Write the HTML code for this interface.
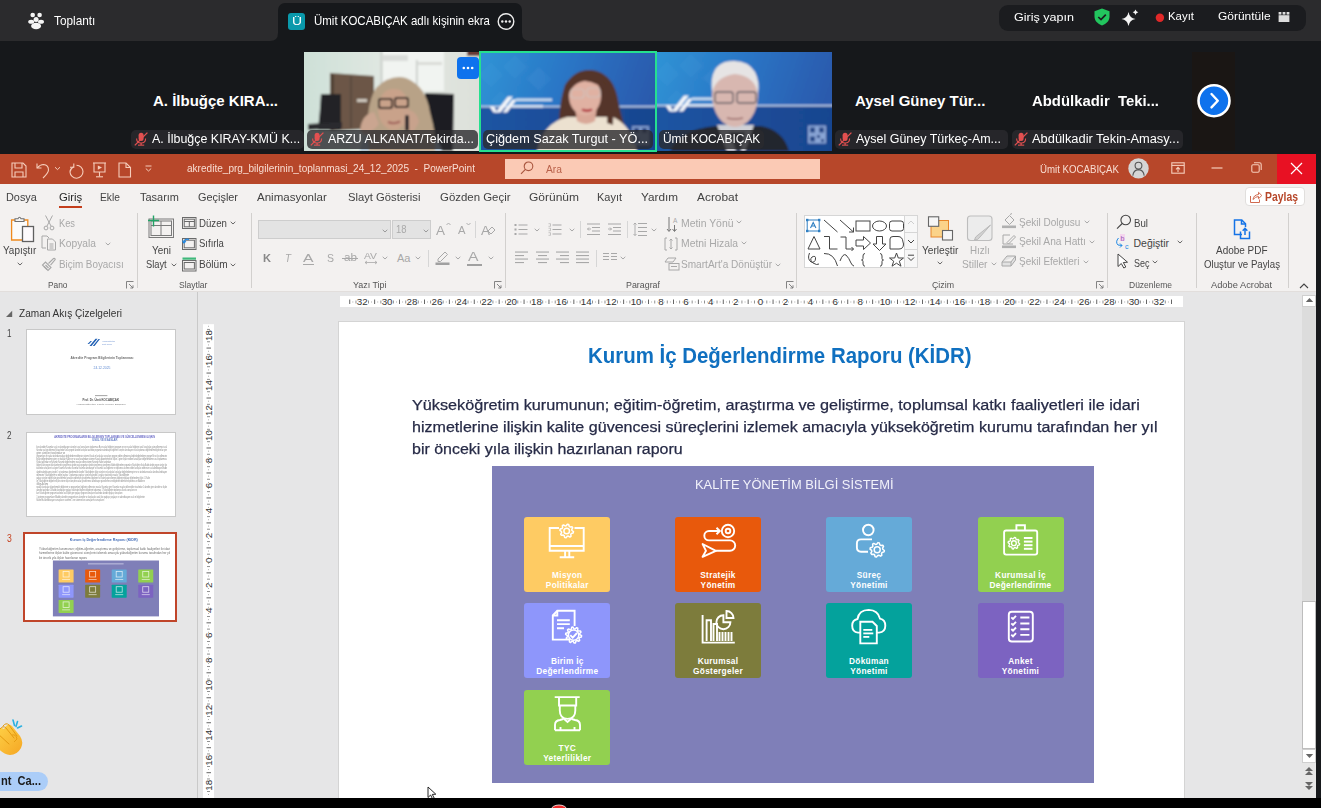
<!DOCTYPE html><html><head><meta charset="utf-8"><style>html,body{margin:0;padding:0}
body{width:1321px;height:808px;overflow:hidden;position:relative;background:#17191c;font-family:"Liberation Sans",sans-serif}
.a{position:absolute}
.t{position:absolute;white-space:pre;line-height:1;transform-origin:0 0}
</style></head><body>
<div class="a" style="left:0px;top:0px;width:1321px;height:40.8px;background:#2b2b2d"></div>
<div class="a" style="left:278px;top:3px;width:244px;height:38px;background:#16181b;border-radius:7px 7px 0 0"></div>
<svg class="a" style="left:270px;top:33px;" width="8" height="8" viewBox="0 0 8 8"><path d="M8 0 V8 H0 Q8 8 8 0Z" fill="#16181b"/></svg>
<svg class="a" style="left:522px;top:33px;" width="8" height="8" viewBox="0 0 8 8"><path d="M0 0 V8 H8 Q0 8 0 0Z" fill="#16181b"/></svg>
<svg class="a" style="left:28px;top:12px;" width="17" height="18" viewBox="0 0 17 18"><g fill="#f4f4f4"><circle cx="4.7" cy="3" r="2.3"/><circle cx="11.6" cy="3" r="2.3"/><circle cx="8.1" cy="7.4" r="2.5"/><ellipse cx="3.2" cy="9.8" rx="3" ry="2"/><ellipse cx="13" cy="9.8" rx="3" ry="2"/><ellipse cx="8.1" cy="14" rx="5" ry="3.2"/></g></svg>
<span class="t" id="t0" style="left:54px;top:14.77px;font-size:12.2px;color:#ffffff;font-family:'Liberation Sans',sans-serif;transform:scaleX(0.9675);">Toplantı</span>
<div class="a" style="left:288px;top:13px;width:17px;height:17px;background:#0a99ab;border-radius:3px"></div>
<span class="t" id="t1" style="left:291.5px;top:16.19px;font-size:11px;color:#ffffff;font-family:'Liberation Sans',sans-serif;transform:scaleX(1.2574);">Ü</span>
<span class="t" id="t2" style="left:314px;top:14.57px;font-size:12.2px;color:#ffffff;font-family:'Liberation Sans',sans-serif;transform:scaleX(0.9415);">Ümit KOCABIÇAK adlı kişinin ekra</span>
<svg class="a" style="left:497px;top:13px;" width="18" height="18" viewBox="0 0 18 18"><circle cx="9" cy="8.5" r="7.8" fill="none" stroke="#eee" stroke-width="1.4"/><g fill="#eee"><circle cx="5.3" cy="8.5" r="1.2"/><circle cx="9" cy="8.5" r="1.2"/><circle cx="12.7" cy="8.5" r="1.2"/></g></svg>
<div class="a" style="left:999px;top:5px;width:307px;height:26px;background:#1b1c1f;border-radius:9px"></div>
<span class="t" id="t3" style="left:1013.8px;top:11.71px;font-size:11.8px;color:#ffffff;font-family:'Liberation Sans',sans-serif;transform:scaleX(1.0658);">Giriş yapın</span>
<svg class="a" style="left:1093px;top:8px;" width="18" height="18" viewBox="0 0 18 18"><path d="M9 0.5 L16.5 3.3 V8.5 C16.5 13 13.3 15.8 9 17.5 C4.7 15.8 1.5 13 1.5 8.5 V3.3Z" fill="#22c55e"/><path d="M5.3 9 L8 11.6 L12.8 6.6" fill="none" stroke="#1b1c1f" stroke-width="1.7"/></svg>
<svg class="a" style="left:1120px;top:9px;" width="20" height="18" viewBox="0 0 20 18"><path d="M8.5 3 Q9.5 9 15.5 10 Q9.5 11 8.5 17 Q7.5 11 1.5 10 Q7.5 9 8.5 3Z" fill="#f4f4f4"/><path d="M15.5 0.5 Q16 2.8 18.3 3.3 Q16 3.8 15.5 6.1 Q15 3.8 12.7 3.3 Q15 2.8 15.5 0.5Z" fill="#f4f4f4"/></svg>
<svg class="a" style="left:1155px;top:13px;" width="10" height="10" viewBox="0 0 10 10"><circle cx="4.9" cy="4.8" r="4.2" fill="#e02828"/></svg>
<span class="t" id="t4" style="left:1168px;top:10.81px;font-size:11.8px;color:#ffffff;font-family:'Liberation Sans',sans-serif;transform:scaleX(0.9669);">Kayıt</span>
<span class="t" id="t5" style="left:1218.4px;top:10.81px;font-size:11.8px;color:#ffffff;font-family:'Liberation Sans',sans-serif;transform:scaleX(1.0152);">Görüntüle</span>
<svg class="a" style="left:1278px;top:11px;" width="12" height="12" viewBox="0 0 12 12"><g fill="#dcdcdc"><rect x="0.6" y="1" width="2.8" height="2.6"/><rect x="4.6" y="1" width="2.8" height="2.6"/><rect x="8.6" y="1" width="2.8" height="2.6"/><rect x="0.6" y="4.2" width="10.8" height="6.8"/></g></svg>
<div class="a" style="left:0px;top:40.8px;width:1321px;height:113.2px;background:#16181b"></div>
<span class="t" id="t6" style="left:153px;top:93.30px;font-size:15px;color:#ffffff;font-weight:700;font-family:'Liberation Sans',sans-serif;">A. İlbuğçe KIRA...</span>
<svg class="a" style="left:304px;top:52px;" width="176" height="99" viewBox="0 0 176 99"><defs><filter id="bl1" x="-5%" y="-5%" width="110%" height="110%"><feGaussianBlur stdDeviation="1"/></filter>
<linearGradient id="wall1" x1="0" x2="1"><stop offset="0" stop-color="#cde0d7"/><stop offset="0.5" stop-color="#e2e8e3"/><stop offset="1" stop-color="#dde0da"/></linearGradient></defs>
<g filter="url(#bl1)">
<rect x="-4" y="-4" width="184" height="107" fill="url(#wall1)"/>
<rect x="77" y="-2" width="63" height="41" fill="#f1f4f1"/>
<rect x="76.5" y="-2" width="2" height="42" fill="#c9cdc9"/><rect x="112" y="8" width="1.6" height="32" fill="#c5c9c5"/>
<rect x="79" y="3" width="25" height="6" fill="#d9dcd9"/><rect x="114" y="10" width="24" height="3" fill="#dadcd8"/>
<rect x="163" y="-2" width="15" height="6" fill="#6a3a36"/>
<path d="M26 21 L70 24 L70 70 L60 77 L26 79Z" fill="#6c5746"/>
<rect x="27" y="22" width="3" height="57" fill="#4f4034"/><rect x="46" y="24" width="2" height="52" fill="#5a4a3c"/>
<rect x="53" y="47" width="10" height="3" fill="#cfc8be"/>
<path d="M17 42 L37 42 L37 78 L14 78 Q16 60 17 42Z" fill="#232428"/>
<path d="M4 72 L38 70 L38 76 L4 78Z" fill="#2a2b2e"/>
<path d="M121 41 L150 42 L149 99 L121 99Z" fill="#1d1e22"/>
<path d="M56 99 Q58 82 72 76 L116 76 Q134 84 138 99Z" fill="#a9bccd"/>
<path d="M65 99 Q60 55 72 36 Q86 22 102 26 Q122 34 126 60 Q133 85 131 99Z" fill="#b8a287"/>
<ellipse cx="89.5" cy="57" rx="15.5" ry="21" fill="#c9a28a"/>
<path d="M74 40 Q82 28 96 30 Q108 34 110 46 Q100 36 88 37 Q78 38 74 48Z" fill="#b8a287"/>
<rect x="75" y="47" width="13" height="9" rx="2" fill="none" stroke="#2a2220" stroke-width="2"/><rect x="91" y="46" width="13" height="9" rx="2" fill="none" stroke="#2a2220" stroke-width="2"/>
<path d="M84 70 Q90 72.5 96 69.5" stroke="#a0605a" stroke-width="2" fill="none"/>
<path d="M56 78 Q58 62 70 60 L75 72 Q68 81 60 83Z" fill="#caa590"/>
<path d="M100 58 Q112 56 115 70 L109 81 L100 77Z" fill="#c8a28c"/>
<rect x="101" y="63" width="4" height="16" rx="1.5" fill="#262629"/>
</g></svg>
<div class="a" style="left:307px;top:130px;width:171px;height:18.7px;background:rgba(42,43,46,0.8);border-radius:5px"></div>
<svg class="a" style="left:309.5px;top:132px;" width="14" height="14" viewBox="0 0 14 14"><g fill="#e25050"><rect x="4.6" y="0.8" width="5" height="8.2" rx="2.5"/><path d="M2.6 6.5 Q2.6 11 7.1 11 Q11.6 11 11.6 6.5" fill="none" stroke="#e25050" stroke-width="1.1"/><rect x="6.5" y="11" width="1.2" height="2"/><rect x="4" y="12.6" width="6.2" height="1.1"/></g><path d="M0.8 13.4 L13.4 0.6" stroke="#e25050" stroke-width="1.3"/></svg>
<span class="t" id="t7" style="left:328px;top:133.22px;font-size:12.5px;color:#ffffff;font-family:'Liberation Sans',sans-serif;transform:scaleX(0.9929);">ARZU ALKANAT/Tekirda...</span>
<div class="a" style="left:131.3px;top:130px;width:172.3px;height:18.7px;background:rgba(42,43,46,0.8);border-radius:5px"></div>
<svg class="a" style="left:133.8px;top:132px;" width="14" height="14" viewBox="0 0 14 14"><g fill="#e25050"><rect x="4.6" y="0.8" width="5" height="8.2" rx="2.5"/><path d="M2.6 6.5 Q2.6 11 7.1 11 Q11.6 11 11.6 6.5" fill="none" stroke="#e25050" stroke-width="1.1"/><rect x="6.5" y="11" width="1.2" height="2"/><rect x="4" y="12.6" width="6.2" height="1.1"/></g><path d="M0.8 13.4 L13.4 0.6" stroke="#e25050" stroke-width="1.3"/></svg>
<span class="t" id="t8" style="left:152.3px;top:133.22px;font-size:12.5px;color:#ffffff;font-family:'Liberation Sans',sans-serif;transform:scaleX(0.9962);">A. İlbuğçe KIRAY-KMÜ K...</span>
<div class="a" style="left:457px;top:57px;width:22px;height:22px;background:#0e72ed;border-radius:4px"></div>
<svg class="a" style="left:457px;top:57px;" width="22" height="22" viewBox="0 0 22 22"><g fill="#fff"><circle cx="6.8" cy="11" r="1.3"/><circle cx="11" cy="11" r="1.3"/><circle cx="15.2" cy="11" r="1.3"/></g></svg>
<svg class="a" style="left:481px;top:53px;" width="175" height="98" viewBox="0 0 175 98"><defs><filter id="blc" x="-5%" y="-5%" width="110%" height="110%"><feGaussianBlur stdDeviation="0.9"/></filter>
<linearGradient id="skyc" x1="0" y1="0" x2="1" y2="0.2"><stop offset="0" stop-color="#2f95d6"/><stop offset="0.5" stop-color="#2b76c6"/><stop offset="1" stop-color="#2a5aad"/></linearGradient>
<linearGradient id="lowc" x1="0" y1="0" x2="1" y2="0"><stop offset="0" stop-color="#1d55a3"/><stop offset="1" stop-color="#19458f"/></linearGradient></defs>
<g filter="url(#blc)">
<rect x="-4" y="-4" width="183" height="106" fill="url(#skyc)"/>
<g fill="#5ab0e8" opacity="0.1"><path d="M10 10 L22 22 L10 34 L-2 22Z"/><path d="M34 2 L46 14 L34 26 L22 14Z"/><path d="M58 14 L70 26 L58 38 L46 26Z"/><path d="M20 38 L30 48 L20 54 L10 48Z"/></g>
<rect x="-4" y="53.6" width="183" height="98" fill="url(#lowc)"/>
<rect x="-4" y="52.8" width="183" height="1.6" fill="#c4d4ec"/>
<g fill="#f4f6fa"><path d="M8.6 53.5 L13 53.5 L16.5 59.5 L12.5 59.5Z"/><path d="M14.5 59.5 L27 43.5 L32 43.5 L19.5 59.5Z"/><path d="M21.5 59.5 L31.5 46.5 L35.8 46.5 L26 59.5Z"/></g>
<rect x="35" y="45.5" width="36" height="2.6" fill="#e8eef8" opacity="0.85"/><rect x="31" y="52" width="31" height="2.6" fill="#e8eef8" opacity="0.8"/>
<path d="M78 98 Q76 55 84 32 Q94 16 110 17 Q130 19 136 42 Q142 75 152 98Z" fill="#553429"/>
<path d="M56 98 Q62 70 86 64 L132 64 Q150 72 156 98Z" fill="#ece1d0"/>
<path d="M94 54 L116 54 L114 68 Q105 74 96 68Z" fill="#d9a898"/>
<ellipse cx="104" cy="43" rx="16" ry="19.5" fill="#e0b1a2"/>
<path d="M86 38 Q90 20 106 21 Q122 22 124 40 Q118 29 104 28 Q92 29 86 44Z" fill="#553429"/>
<path d="M118 30 Q128 40 126 70 L132 72 Q134 40 122 28Z" fill="#553429"/>
<rect x="90" y="36" width="13" height="9" rx="3" fill="none" stroke="#d0c2bc" stroke-width="1.1"/><rect x="106" y="35" width="13" height="9" rx="3" fill="none" stroke="#d0c2bc" stroke-width="1.1"/>
<path d="M101 56.5 Q106 59 111 56.5" stroke="#b0303a" stroke-width="2.4" fill="none"/>
<g opacity="0.75"><rect x="151" y="73" width="17" height="19" fill="#9fb6e0"/><rect x="153" y="75" width="5" height="5" fill="#28407a"/><rect x="161" y="75" width="5" height="5" fill="#28407a"/><rect x="153" y="84" width="5" height="5" fill="#28407a"/></g>
</g></svg>
<svg class="a" style="left:657px;top:52px;" width="175" height="99" viewBox="0 0 175 99"><defs><filter id="blu" x="-5%" y="-5%" width="110%" height="110%"><feGaussianBlur stdDeviation="0.9"/></filter>
<linearGradient id="skyu" x1="0" y1="0" x2="1" y2="0.2"><stop offset="0" stop-color="#2f95d6"/><stop offset="0.5" stop-color="#2b76c6"/><stop offset="1" stop-color="#2a5aad"/></linearGradient>
<linearGradient id="lowu" x1="0" y1="0" x2="1" y2="0"><stop offset="0" stop-color="#1d55a3"/><stop offset="1" stop-color="#19458f"/></linearGradient></defs>
<g filter="url(#blu)">
<rect x="-4" y="-4" width="183" height="107" fill="url(#skyu)"/>
<g fill="#5ab0e8" opacity="0.1"><path d="M10 10 L22 22 L10 34 L-2 22Z"/><path d="M34 2 L46 14 L34 26 L22 14Z"/><path d="M58 14 L70 26 L58 38 L46 26Z"/><path d="M20 38 L30 48 L20 54 L10 48Z"/></g>
<rect x="-4" y="53.6" width="183" height="99" fill="url(#lowu)"/>
<rect x="-4" y="52.8" width="183" height="1.6" fill="#c4d4ec"/>
<g fill="#f4f6fa"><path d="M8.6 53.5 L13 53.5 L16.5 59.5 L12.5 59.5Z"/><path d="M14.5 59.5 L27 43.5 L32 43.5 L19.5 59.5Z"/><path d="M21.5 59.5 L31.5 46.5 L35.8 46.5 L26 59.5Z"/></g>
<rect x="35" y="45.5" width="36" height="2.6" fill="#e8eef8" opacity="0.85"/><rect x="31" y="52" width="31" height="2.6" fill="#e8eef8" opacity="0.8"/>
<path d="M13 99 Q22 78 58 74 L104 74 Q126 78 132 99Z" fill="#24262d"/>
<path d="M60 73 L70 99 L88 99 L97 73Z" fill="#cfd0d6"/><path d="M72 80 L79 99 L84 99 L88 80Z" fill="#33353c"/>
<ellipse cx="78" cy="43" rx="23" ry="32" fill="#d8b7b0"/>
<path d="M55 40 Q52 12 72 9.3 Q90 7 98 20 Q103 30 101 42 Q98 24 78 22 Q60 24 55 40Z" fill="#e6e4e4"/>
<rect x="58" y="40" width="18" height="11" rx="2.5" fill="none" stroke="#5d5860" stroke-width="1.3"/><rect x="80" y="40" width="19" height="11" rx="2.5" fill="none" stroke="#5d5860" stroke-width="1.3"/>
<path d="M70 66 Q78 68 86 66" stroke="#9a6a68" stroke-width="1.4" fill="none"/>
<g opacity="0.8"><rect x="151" y="73.5" width="18" height="18" fill="#a6bde6"/><rect x="153" y="75.5" width="5" height="5" fill="#2a4a88"/><rect x="162" y="75.5" width="5" height="5" fill="#2a4a88"/><rect x="153" y="84.5" width="5" height="5" fill="#2a4a88"/><rect x="160" y="83" width="3" height="3" fill="#2a4a88"/><rect x="164" y="87" width="3" height="3" fill="#2a4a88"/></g>
</g></svg>
<div class="a" style="left:479px;top:51.3px;width:178px;height:100.7px;border:2px solid #25e08f;box-sizing:border-box"></div>
<div class="a" style="left:483px;top:130px;width:170px;height:18.7px;background:rgba(42,43,46,0.8);border-radius:5px"></div>
<span class="t" id="t9" style="left:486px;top:133.22px;font-size:12.5px;color:#ffffff;font-family:'Liberation Sans',sans-serif;transform:scaleX(1.0153);">Çiğdem Sazak Turgut - YÖ...</span>
<div class="a" style="left:659px;top:130px;width:105px;height:18.7px;background:rgba(42,43,46,0.8);border-radius:5px"></div>
<span class="t" id="t10" style="left:662.7px;top:133.22px;font-size:12.5px;color:#ffffff;font-family:'Liberation Sans',sans-serif;transform:scaleX(0.9529);">Ümit KOCABIÇAK</span>
<span class="t" id="t11" style="left:855px;top:93.30px;font-size:15px;color:#ffffff;font-weight:700;font-family:'Liberation Sans',sans-serif;">Aysel Güney Tür...</span>
<span class="t" id="t12" style="left:1032px;top:93.30px;font-size:15px;color:#ffffff;font-weight:700;font-family:'Liberation Sans',sans-serif;transform:scaleX(0.9915);">Abdülkadir  Teki...</span>
<div class="a" style="left:835px;top:130px;width:173px;height:18.7px;background:rgba(42,43,46,0.8);border-radius:5px"></div>
<svg class="a" style="left:837.5px;top:132px;" width="14" height="14" viewBox="0 0 14 14"><g fill="#e25050"><rect x="4.6" y="0.8" width="5" height="8.2" rx="2.5"/><path d="M2.6 6.5 Q2.6 11 7.1 11 Q11.6 11 11.6 6.5" fill="none" stroke="#e25050" stroke-width="1.1"/><rect x="6.5" y="11" width="1.2" height="2"/><rect x="4" y="12.6" width="6.2" height="1.1"/></g><path d="M0.8 13.4 L13.4 0.6" stroke="#e25050" stroke-width="1.3"/></svg>
<span class="t" id="t13" style="left:856px;top:133.22px;font-size:12.5px;color:#ffffff;font-family:'Liberation Sans',sans-serif;transform:scaleX(0.9970);">Aysel Güney Türkeç-Am...</span>
<div class="a" style="left:1011.5px;top:130px;width:171.5px;height:18.7px;background:rgba(42,43,46,0.8);border-radius:5px"></div>
<svg class="a" style="left:1014.0px;top:132px;" width="14" height="14" viewBox="0 0 14 14"><g fill="#e25050"><rect x="4.6" y="0.8" width="5" height="8.2" rx="2.5"/><path d="M2.6 6.5 Q2.6 11 7.1 11 Q11.6 11 11.6 6.5" fill="none" stroke="#e25050" stroke-width="1.1"/><rect x="6.5" y="11" width="1.2" height="2"/><rect x="4" y="12.6" width="6.2" height="1.1"/></g><path d="M0.8 13.4 L13.4 0.6" stroke="#e25050" stroke-width="1.3"/></svg>
<span class="t" id="t14" style="left:1032px;top:133.22px;font-size:12.5px;color:#ffffff;font-family:'Liberation Sans',sans-serif;transform:scaleX(1.0289);">Abdülkadir Tekin-Amasy...</span>
<div class="a" style="left:1192px;top:52px;width:43px;height:99px;background:#1a1614"></div>
<svg class="a" style="left:1196px;top:83px;" width="36" height="36" viewBox="0 0 36 36"><circle cx="18" cy="17.7" r="15.5" fill="#0e72ed" stroke="#fff" stroke-width="2.6"/><path d="M15.5 11 L21.8 17.7 L15.5 24.4" fill="none" stroke="#fff" stroke-width="2.4" stroke-linecap="round" stroke-linejoin="round"/></svg>
<div class="a" style="left:0px;top:154px;width:1316px;height:644px;background:#e6e6e6"></div>
<div class="a" style="left:0px;top:154px;width:1316px;height:29.6px;background:#b7472a"></div>
<svg class="a" style="left:11px;top:162px;" width="16" height="16" viewBox="0 0 16 16"><g fill="none" stroke="#f6cdbb" stroke-width="1.1"><path d="M1 1 H12 L15 4 V15 H1Z"/><path d="M4 1 V6 H11 V1"/><path d="M4 15 V10 H12 V15"/></g></svg>
<svg class="a" style="left:35px;top:162px;" width="17" height="17" viewBox="0 0 17 17"><g fill="none" stroke="#f6cdbb" stroke-width="1.1"><path d="M2 1.5 V6 H6.5"/><path d="M2.3 5.8 Q5 2.5 8.5 2.5 Q13.5 3 13.5 8 Q13.3 11 8 16"/></g></svg>
<svg class="a" style="left:54px;top:166px;" width="7" height="5" viewBox="0 0 7 5"><path d="M1 1.2 L3.5 3.6 L6 1.2" fill="none" stroke="#f6cdbb" stroke-width="1"/></svg>
<svg class="a" style="left:68px;top:162px;" width="17" height="17" viewBox="0 0 17 17"><g fill="none" stroke="#f6cdbb" stroke-width="1.1"><path d="M5.8 1.5 V5.2 H2"/><path d="M5.6 4.8 Q2 7 2 10 A6.5 6.5 0 1 0 8.5 3.2"/></g></svg>
<svg class="a" style="left:92px;top:162px;" width="15" height="16" viewBox="0 0 15 16"><g fill="none" stroke="#f6cdbb" stroke-width="1.1"><path d="M1 1 H14"/><path d="M2 1 V10 H13 V1"/><path d="M7.5 10 V14.5"/><path d="M4 14.8 H11"/></g><path d="M5.8 3.4 L10 5.6 L5.8 7.8Z" fill="#f6cdbb"/></svg>
<svg class="a" style="left:118px;top:162px;" width="14" height="16" viewBox="0 0 14 16"><g fill="none" stroke="#f6cdbb" stroke-width="1.1"><path d="M1 1 H8 L12.5 5.5 V15 H1Z"/><path d="M8 1 V5.5 H12.5"/></g></svg>
<svg class="a" style="left:144px;top:164px;" width="9" height="9" viewBox="0 0 9 9"><g fill="none" stroke="#f6cdbb" stroke-width="1"><path d="M1.5 2 H7.5"/><path d="M1.8 4.5 L4.5 7 L7.2 4.5"/></g></svg>
<span class="t" id="t15" style="left:186.8px;top:162.71px;font-size:10.5px;color:#f8ddd2;font-family:'Liberation Sans',sans-serif;transform:scaleX(0.9580);">akredite_prg_bilgilerinin_toplanmasi_24_12_2025  -  PowerPoint</span>
<div class="a" style="left:505px;top:159.2px;width:315px;height:19.6px;background:#fbcab5"></div>
<svg class="a" style="left:518px;top:160px;" width="18" height="18" viewBox="0 0 18 18"><g fill="none" stroke="#a8553e" stroke-width="1.1"><circle cx="10.5" cy="6.3" r="4.3"/><path d="M7.4 9.4 L3 13.8"/></g></svg>
<span class="t" id="t16" style="left:546px;top:163.91px;font-size:10.5px;color:#b9614a;font-family:'Liberation Sans',sans-serif;transform:scaleX(0.9790);">Ara</span>
<span class="t" id="t17" style="left:1039.8px;top:163.89px;font-size:11px;color:#f8ddd2;font-family:'Liberation Sans',sans-serif;transform:scaleX(0.8792);">Ümit KOCABIÇAK</span>
<svg class="a" style="left:1128px;top:158px;" width="21" height="21" viewBox="0 0 21 21"><circle cx="10.5" cy="10.4" r="10.2" fill="#d5d5d5"/><g fill="none" stroke="#555" stroke-width="1.1"><circle cx="10.5" cy="7.6" r="3.4"/><path d="M4.8 17.6 Q5.5 11.8 10.5 11.6 Q15.5 11.8 16.2 17.6"/></g></svg>
<svg class="a" style="left:1171px;top:162px;" width="14" height="12" viewBox="0 0 14 12"><g fill="none" stroke="#f6cdbb" stroke-width="1.1"><rect x="0.8" y="0.8" width="12.4" height="10.4"/><path d="M0.8 3.4 H13.2"/><path d="M7 10 V5.5 M5 7.3 L7 5.3 L9 7.3"/></g></svg>
<svg class="a" style="left:1211px;top:166px;" width="12" height="4" viewBox="0 0 12 4"><path d="M0.5 2 H11.5" stroke="#f6cdbb" stroke-width="1.2"/></svg>
<svg class="a" style="left:1251px;top:162px;" width="11" height="11" viewBox="0 0 11 11"><g fill="none" stroke="#f6cdbb" stroke-width="1.1"><rect x="0.8" y="2.8" width="7.4" height="7.4" rx="1.2"/><path d="M3 0.8 H8.5 Q10.2 0.8 10.2 2.5 V8"/></g></svg>
<div class="a" style="left:1277px;top:154px;width:39px;height:29.6px;background:#e81123"></div>
<svg class="a" style="left:1290px;top:162px;" width="13" height="13" viewBox="0 0 13 13"><path d="M1 1 L12 12 M12 1 L1 12" stroke="#fff" stroke-width="1.2"/></svg>
<div class="a" style="left:0px;top:183.6px;width:1316px;height:108.4px;background:#f3f1f0;border-bottom:1px solid #e2dedc;box-sizing:border-box"></div>
<span class="t" id="t18" style="left:6.4px;top:192.09px;font-size:11px;color:#424242;font-family:'Liberation Sans',sans-serif;transform:scaleX(0.9876);">Dosya</span>
<span class="t" id="t19" style="left:59px;top:192.09px;font-size:11px;color:#262626;font-family:'Liberation Sans',sans-serif;transform:scaleX(1.0261);">Giriş</span>
<span class="t" id="t20" style="left:100.4px;top:192.09px;font-size:11px;color:#424242;font-family:'Liberation Sans',sans-serif;transform:scaleX(0.9296);">Ekle</span>
<span class="t" id="t21" style="left:140px;top:192.09px;font-size:11px;color:#424242;font-family:'Liberation Sans',sans-serif;transform:scaleX(0.9968);">Tasarım</span>
<span class="t" id="t22" style="left:198px;top:192.09px;font-size:11px;color:#424242;font-family:'Liberation Sans',sans-serif;transform:scaleX(0.9915);">Geçişler</span>
<span class="t" id="t23" style="left:257.4px;top:192.09px;font-size:11px;color:#424242;font-family:'Liberation Sans',sans-serif;transform:scaleX(1.0474);">Animasyonlar</span>
<span class="t" id="t24" style="left:347.6px;top:192.09px;font-size:11px;color:#424242;font-family:'Liberation Sans',sans-serif;transform:scaleX(1.0208);">Slayt Gösterisi</span>
<span class="t" id="t25" style="left:439.5px;top:192.09px;font-size:11px;color:#424242;font-family:'Liberation Sans',sans-serif;transform:scaleX(1.0387);">Gözden Geçir</span>
<span class="t" id="t26" style="left:529px;top:192.09px;font-size:11px;color:#424242;font-family:'Liberation Sans',sans-serif;transform:scaleX(1.0903);">Görünüm</span>
<span class="t" id="t27" style="left:597px;top:192.09px;font-size:11px;color:#424242;font-family:'Liberation Sans',sans-serif;transform:scaleX(0.9969);">Kayıt</span>
<span class="t" id="t28" style="left:641px;top:192.09px;font-size:11px;color:#424242;font-family:'Liberation Sans',sans-serif;transform:scaleX(1.0681);">Yardım</span>
<span class="t" id="t29" style="left:697px;top:192.09px;font-size:11px;color:#424242;font-family:'Liberation Sans',sans-serif;transform:scaleX(1.0812);">Acrobat</span>
<div class="a" style="left:59px;top:205.7px;width:23.2px;height:2.4px;background:#c43e1c"></div>
<div class="a" style="left:1245px;top:187px;width:60px;height:19px;background:#fff;border:1px solid #e1dfdd;border-radius:4px;box-sizing:border-box"></div>
<svg class="a" style="left:1249px;top:190px;" width="14" height="14" viewBox="0 0 14 14"><g fill="none" stroke="#d06a50" stroke-width="1"><path d="M1.5 6 V12.5 H10.5 V9.5"/><path d="M4 9.5 Q4.5 5 9.5 4.5 V2.3 L12.8 5.5 L9.5 8.7 V6.5 Q6.5 6.5 4 9.5Z"/></g></svg>
<span class="t" id="t30" style="left:1264.5px;top:191.14px;font-size:12px;color:#b7472a;font-weight:700;font-family:'Liberation Sans',sans-serif;transform:scaleX(0.8674);">Paylaş</span>
<div class="a" style="left:137px;top:213px;width:1px;height:75px;background:#d2d0ce"></div>
<div class="a" style="left:250.6px;top:213px;width:1px;height:75px;background:#d2d0ce"></div>
<div class="a" style="left:504.5px;top:213px;width:1px;height:75px;background:#d2d0ce"></div>
<div class="a" style="left:796px;top:213px;width:1px;height:75px;background:#d2d0ce"></div>
<div class="a" style="left:1107px;top:213px;width:1px;height:75px;background:#d2d0ce"></div>
<div class="a" style="left:1196px;top:213px;width:1px;height:75px;background:#d2d0ce"></div>
<div class="a" style="left:1288px;top:213px;width:1px;height:75px;background:#d2d0ce"></div>
<svg class="a" style="left:10px;top:215px;" width="26" height="28" viewBox="0 0 26 28"><path d="M1.6 5 H17.8 V25 H1.6Z" fill="#fbfbfb" stroke="#ef8a1e" stroke-width="1.3"/><path d="M5 6.5 V3.8 H8 Q9.5 0.8 11 3.8 H14 V6.5Z" fill="#f6f6f6" stroke="#707070" stroke-width="1.1"/><rect x="12.5" y="11.5" width="11" height="15" fill="#fdfafc" stroke="#606060" stroke-width="1.3"/></svg>
<span class="t" id="t31" style="left:3.3px;top:244.91px;font-size:10.5px;color:#444;font-family:'Liberation Sans',sans-serif;transform:scaleX(0.9433);">Yapıştır</span>
<svg class="a" style="left:17.3px;top:262.3px;" width="6" height="4" viewBox="0 0 6 4"><path d="M0.7 0.8 L3 3 L5.3 0.8" fill="none" stroke="#666" stroke-width="1"/></svg>
<svg class="a" style="left:43px;top:215px;" width="12" height="16" viewBox="0 0 12 16"><g fill="none" stroke="#a8a8a8" stroke-width="1"><path d="M2.5 0.5 L8 11 M9.5 0.5 L4 11"/><circle cx="3" cy="13" r="1.9"/><circle cx="9" cy="13" r="1.9"/></g></svg>
<span class="t" id="t32" style="left:58.6px;top:217.91px;font-size:10.5px;color:#a8a8a8;font-family:'Liberation Sans',sans-serif;transform:scaleX(0.8843);">Kes</span>
<svg class="a" style="left:41px;top:235px;" width="16" height="16" viewBox="0 0 16 16"><g fill="none" stroke="#a8a8a8" stroke-width="1"><path d="M5 13 H1 V1 H6 L8 3"/><path d="M6.5 4 H11.5 L14.5 7 V15 H6.5Z"/><path d="M8.5 9 H12.5 M8.5 11 H12.5 M8.5 13 H12.5"/></g></svg>
<span class="t" id="t33" style="left:58.6px;top:238.41px;font-size:10.5px;color:#a8a8a8;font-family:'Liberation Sans',sans-serif;transform:scaleX(0.9749);">Kopyala</span>
<svg class="a" style="left:104.5px;top:241.7px;" width="6" height="4" viewBox="0 0 6 4"><path d="M0.7 0.8 L3 3 L5.3 0.8" fill="none" stroke="#a8a8a8" stroke-width="1"/></svg>
<svg class="a" style="left:41px;top:256px;" width="16" height="16" viewBox="0 0 16 16"><g fill="none" stroke="#a8a8a8" stroke-width="1.1"><path d="M1.5 9 L7 14.5 L10 11.5 L4.5 6Z"/><path d="M7.5 7.5 L12.5 2.5 Q14 2 14.2 3.5 L9.5 9.2"/><path d="M3 10.5 L6 13.5 M4.5 9 L7.5 12"/></g></svg>
<span class="t" id="t34" style="left:58.8px;top:258.91px;font-size:10.5px;color:#a8a8a8;font-family:'Liberation Sans',sans-serif;transform:scaleX(0.9396);">Biçim Boyacısı</span>
<span class="t" id="t35" style="left:48.2px;top:279.76px;font-size:9.5px;color:#555;font-family:'Liberation Sans',sans-serif;transform:scaleX(0.8789);">Pano</span>
<svg class="a" style="left:126px;top:281px;" width="8" height="8" viewBox="0 0 8 8"><g fill="none" stroke="#777" stroke-width="0.9"><path d="M0.5 7.5 V0.5 H7.5"/><path d="M3 3 L7 7 M7 4.3 V7 H4.3"/></g></svg>
<svg class="a" style="left:147px;top:215px;" width="28" height="24" viewBox="0 0 28 24"><g fill="none" stroke="#7a7a7a" stroke-width="1"><rect x="2" y="4" width="24.5" height="18.5"/><rect x="4" y="6" width="20.5" height="14.5"/><path d="M14 6 V20.5 M4 10.5 H24.5"/></g><path d="M6.5 0.5 V11.5 M1 5.5 H12" stroke="#21a366" stroke-width="1.4"/></svg>
<span class="t" id="t36" style="left:152.1px;top:245.31px;font-size:10.5px;color:#444;font-family:'Liberation Sans',sans-serif;transform:scaleX(0.9470);">Yeni</span>
<span class="t" id="t37" style="left:145.8px;top:258.91px;font-size:10.5px;color:#444;font-family:'Liberation Sans',sans-serif;transform:scaleX(0.8867);">Slayt</span>
<svg class="a" style="left:170.8px;top:262.6px;" width="6" height="4" viewBox="0 0 6 4"><path d="M0.7 0.8 L3 3 L5.3 0.8" fill="none" stroke="#666" stroke-width="1"/></svg>
<svg class="a" style="left:181.5px;top:216.5px;" width="15" height="12" viewBox="0 0 15 12"><g fill="none" stroke="#6a6a6a" stroke-width="1"><rect x="0.5" y="0.5" width="13.5" height="11"/><rect x="2.2" y="2.2" width="10.2" height="7.6"/><path d="M2.2 4.5 H12.4 M7.3 4.5 V9.8"/></g></svg>
<span class="t" id="t38" style="left:199.4px;top:217.91px;font-size:10.5px;color:#444;font-family:'Liberation Sans',sans-serif;transform:scaleX(0.9190);">Düzen</span>
<svg class="a" style="left:230px;top:221.2px;" width="6" height="4" viewBox="0 0 6 4"><path d="M0.7 0.8 L3 3 L5.3 0.8" fill="none" stroke="#666" stroke-width="1"/></svg>
<svg class="a" style="left:181.5px;top:236.5px;" width="15" height="13" viewBox="0 0 15 13"><g fill="none" stroke="#6a6a6a" stroke-width="1"><rect x="0.5" y="1.5" width="13.5" height="11"/><rect x="2.2" y="3.2" width="10.2" height="7.6"/></g><path d="M1.5 5.5 Q3 1 7 2.5" fill="none" stroke="#1e88e5" stroke-width="1.2"/><path d="M0.5 3.5 L1.8 6 L4 4.3" fill="none" stroke="#1e88e5" stroke-width="1.1"/></svg>
<span class="t" id="t39" style="left:199.4px;top:238.41px;font-size:10.5px;color:#444;font-family:'Liberation Sans',sans-serif;transform:scaleX(0.9075);">Sıfırla</span>
<svg class="a" style="left:181.5px;top:256.5px;" width="15" height="15" viewBox="0 0 15 15"><rect x="0.5" y="0.5" width="13.5" height="2.2" fill="#3fb87a"/><g fill="none" stroke="#6a6a6a" stroke-width="1"><rect x="0.5" y="3.5" width="13.5" height="10.5"/><rect x="2.2" y="5.5" width="10.2" height="6.5"/></g></svg>
<span class="t" id="t40" style="left:199.4px;top:258.91px;font-size:10.5px;color:#444;font-family:'Liberation Sans',sans-serif;transform:scaleX(0.9608);">Bölüm</span>
<svg class="a" style="left:230px;top:262.6px;" width="6" height="4" viewBox="0 0 6 4"><path d="M0.7 0.8 L3 3 L5.3 0.8" fill="none" stroke="#666" stroke-width="1"/></svg>
<span class="t" id="t41" style="left:178.9px;top:279.76px;font-size:9.5px;color:#555;font-family:'Liberation Sans',sans-serif;transform:scaleX(0.8963);">Slaytlar</span>
<div class="a" style="left:258px;top:220px;width:132.5px;height:19.3px;background:#e3e3e3;border:1px solid #cdcdcd;box-sizing:border-box"></div>
<svg class="a" style="left:382px;top:228.5px;" width="6" height="4" viewBox="0 0 6 4"><path d="M0.7 0.8 L3 3 L5.3 0.8" fill="none" stroke="#999" stroke-width="1"/></svg>
<div class="a" style="left:392px;top:220px;width:38.5px;height:19.3px;background:#e3e3e3;border:1px solid #cdcdcd;box-sizing:border-box"></div>
<span class="t" id="t42" style="left:396px;top:225.34px;font-size:10px;color:#a9a9a9;font-family:'Liberation Sans',sans-serif;transform:scaleX(0.9438);">18</span>
<svg class="a" style="left:423px;top:228.5px;" width="6" height="4" viewBox="0 0 6 4"><path d="M0.7 0.8 L3 3 L5.3 0.8" fill="none" stroke="#999" stroke-width="1"/></svg>
<span class="t" id="t43" style="left:436px;top:223.50px;font-size:13px;color:#a8a8a8;font-family:'Liberation Sans',sans-serif;transform:scaleX(1.0378);">A</span>
<svg class="a" style="left:445.5px;top:222px;" width="5" height="4" viewBox="0 0 5 4"><path d="M0.5 3 L2.5 1 L4.5 3" fill="none" stroke="#a8a8a8" stroke-width="0.9"/></svg>
<span class="t" id="t44" style="left:458px;top:225.19px;font-size:11px;color:#a8a8a8;font-family:'Liberation Sans',sans-serif;transform:scaleX(1.0213);">A</span>
<svg class="a" style="left:465.5px;top:222px;" width="5" height="4" viewBox="0 0 5 4"><path d="M0.5 1 L2.5 3 L4.5 1" fill="none" stroke="#a8a8a8" stroke-width="0.9"/></svg>
<div class="a" style="left:475px;top:221px;width:1px;height:17px;background:#d6d6d6"></div>
<span class="t" id="t45" style="left:481px;top:223.50px;font-size:13px;color:#a8a8a8;font-family:'Liberation Sans',sans-serif;transform:scaleX(1.0378);">A</span>
<svg class="a" style="left:487px;top:226px;" width="9" height="9" viewBox="0 0 9 9"><path d="M1 5 L5 1 L8 4 L4 8Z" fill="none" stroke="#a8a8a8" stroke-width="1"/></svg>
<span class="t" id="t46" style="left:262.8px;top:252.69px;font-size:11px;color:#888;font-weight:700;font-family:'Liberation Sans',sans-serif;transform:scaleX(1.0059);">K</span>
<span class="t" id="t47" style="left:285px;top:252.69px;font-size:11px;color:#a8a8a8;font-family:'Liberation Sans',sans-serif;transform:scaleX(0.8910);font-style:italic;">T</span>
<span class="t" id="t48" style="left:303px;top:252.69px;font-size:11px;color:#a8a8a8;font-family:'Liberation Sans',sans-serif;transform:scaleX(1.4298);">A</span>
<div class="a" style="left:303px;top:264px;width:11px;height:1.2px;background:#a8a8a8"></div>
<span class="t" id="t49" style="left:327px;top:252.69px;font-size:11px;color:#a8a8a8;font-family:'Liberation Sans',sans-serif;transform:scaleX(0.9532);">S</span>
<span class="t" id="t50" style="left:343.5px;top:252.53px;font-size:10px;color:#a8a8a8;font-family:'Liberation Sans',sans-serif;transform:scaleX(1.1685);">ab</span>
<div class="a" style="left:342px;top:257.5px;width:16px;height:1px;background:#a8a8a8"></div>
<span class="t" id="t51" style="left:364px;top:251.46px;font-size:9.5px;color:#a8a8a8;font-family:'Liberation Sans',sans-serif;transform:scaleX(1.0862);">AV</span>
<svg class="a" style="left:364px;top:260px;" width="14" height="5" viewBox="0 0 14 5"><path d="M1 2.5 H13 M3 1 L1 2.5 L3 4 M11 1 L13 2.5 L11 4" fill="none" stroke="#a8a8a8" stroke-width="0.8"/></svg>
<svg class="a" style="left:381.5px;top:255.5px;" width="6" height="4" viewBox="0 0 6 4"><path d="M0.7 0.8 L3 3 L5.3 0.8" fill="none" stroke="#a8a8a8" stroke-width="1"/></svg>
<span class="t" id="t52" style="left:397px;top:252.69px;font-size:11px;color:#a8a8a8;font-family:'Liberation Sans',sans-serif;">Aa</span>
<svg class="a" style="left:414.5px;top:255.5px;" width="6" height="4" viewBox="0 0 6 4"><path d="M0.7 0.8 L3 3 L5.3 0.8" fill="none" stroke="#a8a8a8" stroke-width="1"/></svg>
<div class="a" style="left:428px;top:250px;width:1px;height:17px;background:#d6d6d6"></div>
<svg class="a" style="left:434.5px;top:249px;" width="15" height="16" viewBox="0 0 15 16"><path d="M3 10 L10 3 L12.5 5.5 L5.5 12.5 L3 12.5Z" fill="none" stroke="#a8a8a8" stroke-width="1"/><rect x="0.5" y="13.5" width="14" height="2.5" fill="#a0a0a0"/></svg>
<svg class="a" style="left:454.5px;top:255.5px;" width="6" height="4" viewBox="0 0 6 4"><path d="M0.7 0.8 L3 3 L5.3 0.8" fill="none" stroke="#a8a8a8" stroke-width="1"/></svg>
<span class="t" id="t53" style="left:468px;top:251.34px;font-size:12px;color:#a8a8a8;font-family:'Liberation Sans',sans-serif;transform:scaleX(1.3099);">A</span>
<div class="a" style="left:467px;top:263.5px;width:15px;height:2.5px;background:#a0a0a0"></div>
<svg class="a" style="left:487.5px;top:255.5px;" width="6" height="4" viewBox="0 0 6 4"><path d="M0.7 0.8 L3 3 L5.3 0.8" fill="none" stroke="#a8a8a8" stroke-width="1"/></svg>
<span class="t" id="t54" style="left:353px;top:279.76px;font-size:9.5px;color:#555;font-family:'Liberation Sans',sans-serif;transform:scaleX(0.9375);">Yazı Tipi</span>
<svg class="a" style="left:494px;top:281px;" width="8" height="8" viewBox="0 0 8 8"><g fill="none" stroke="#777" stroke-width="0.9"><path d="M0.5 7.5 V0.5 H7.5"/><path d="M3 3 L7 7 M7 4.3 V7 H4.3"/></g></svg>
<svg class="a" style="left:514px;top:222.5px;" width="14" height="13" viewBox="0 0 14 13"><rect x="0.5" y="1" width="2" height="2" fill="#a8a8a8"/><rect x="4.5" y="1.5" width="9" height="1" fill="#a8a8a8"/><rect x="0.5" y="5.5" width="2" height="2" fill="#a8a8a8"/><rect x="4.5" y="6.0" width="9" height="1" fill="#a8a8a8"/><rect x="0.5" y="10" width="2" height="2" fill="#a8a8a8"/><rect x="4.5" y="10.5" width="9" height="1" fill="#a8a8a8"/></svg>
<svg class="a" style="left:533.5px;top:227.8px;" width="6" height="4" viewBox="0 0 6 4"><path d="M0.7 0.8 L3 3 L5.3 0.8" fill="none" stroke="#a8a8a8" stroke-width="1"/></svg>
<svg class="a" style="left:548px;top:222.5px;" width="14" height="13" viewBox="0 0 14 13"><path d="M0.5 0.7 h2 v2.6 h-2" fill="none" stroke="#a8a8a8" stroke-width="0.6"/><rect x="4.5" y="1.5" width="9" height="1" fill="#a8a8a8"/><path d="M0.5 5.2 h2 v2.6 h-2" fill="none" stroke="#a8a8a8" stroke-width="0.6"/><rect x="4.5" y="6.0" width="9" height="1" fill="#a8a8a8"/><path d="M0.5 9.7 h2 v2.6 h-2" fill="none" stroke="#a8a8a8" stroke-width="0.6"/><rect x="4.5" y="10.5" width="9" height="1" fill="#a8a8a8"/></svg>
<svg class="a" style="left:568.5px;top:227.8px;" width="6" height="4" viewBox="0 0 6 4"><path d="M0.7 0.8 L3 3 L5.3 0.8" fill="none" stroke="#a8a8a8" stroke-width="1"/></svg>
<div class="a" style="left:580px;top:221px;width:1px;height:17px;background:#d6d6d6"></div>
<svg class="a" style="left:587px;top:223px;" width="14" height="13" viewBox="0 0 14 13"><g fill="#a8a8a8"><rect x="0" y="0.5" width="13" height="1"/><rect x="5" y="4" width="8" height="1"/><rect x="5" y="7.5" width="8" height="1"/><rect x="0" y="11" width="13" height="1"/></g><path d="M4 6 H0.5 M2 4.5 L0.5 6 L2 7.5" fill="none" stroke="#a8a8a8" stroke-width="0.9"/></svg>
<svg class="a" style="left:608px;top:223px;" width="14" height="13" viewBox="0 0 14 13"><g fill="#a8a8a8"><rect x="0" y="0.5" width="13" height="1"/><rect x="5" y="4" width="8" height="1"/><rect x="5" y="7.5" width="8" height="1"/><rect x="0" y="11" width="13" height="1"/></g><path d="M0 6 H3.5 M2 4.5 L3.5 6 L2 7.5" fill="none" stroke="#a8a8a8" stroke-width="0.9"/></svg>
<div class="a" style="left:627px;top:221px;width:1px;height:17px;background:#d6d6d6"></div>
<svg class="a" style="left:632.5px;top:222px;" width="15" height="14" viewBox="0 0 15 14"><g fill="#a8a8a8"><rect x="5" y="1" width="9" height="1"/><rect x="5" y="5" width="9" height="1"/><rect x="5" y="9" width="9" height="1"/><rect x="5" y="13" width="9" height="1"/></g><path d="M2 1 V13.5 M0.5 2.5 L2 1 L3.5 2.5 M0.5 12 L2 13.5 L3.5 12" fill="none" stroke="#a8a8a8" stroke-width="0.9"/></svg>
<svg class="a" style="left:650.5px;top:227.8px;" width="6" height="4" viewBox="0 0 6 4"><path d="M0.7 0.8 L3 3 L5.3 0.8" fill="none" stroke="#a8a8a8" stroke-width="1"/></svg>
<svg class="a" style="left:665.5px;top:215.5px;" width="13" height="17" viewBox="0 0 13 17"><path d="M3 1 V15 M1 13 L3 15.5 L5 13 M8.5 9 V15 M6.5 13 L8.5 15.5 L10.5 13" fill="none" stroke="#777" stroke-width="1"/><text x="7" y="7" font-size="6.5" font-family="Liberation Sans" fill="#a8a8a8">A</text></svg>
<span class="t" id="t55" style="left:681px;top:218.41px;font-size:10.5px;color:#a8a8a8;font-family:'Liberation Sans',sans-serif;transform:scaleX(0.9917);">Metin Yönü</span>
<svg class="a" style="left:735.5px;top:220.2px;" width="6" height="4" viewBox="0 0 6 4"><path d="M0.7 0.8 L3 3 L5.3 0.8" fill="none" stroke="#a8a8a8" stroke-width="1"/></svg>
<svg class="a" style="left:515px;top:251px;" width="14" height="13" viewBox="0 0 14 13"><rect x="0" y="0.5" width="13" height="1.1" fill="#a8a8a8"/><rect x="0" y="4.0" width="9" height="1.1" fill="#a8a8a8"/><rect x="0" y="7.5" width="13" height="1.1" fill="#a8a8a8"/><rect x="0" y="11.0" width="9" height="1.1" fill="#a8a8a8"/></svg>
<svg class="a" style="left:536px;top:251px;" width="14" height="13" viewBox="0 0 14 13"><rect x="0.0" y="0.5" width="13" height="1.1" fill="#a8a8a8"/><rect x="2.0" y="4.0" width="9" height="1.1" fill="#a8a8a8"/><rect x="0.0" y="7.5" width="13" height="1.1" fill="#a8a8a8"/><rect x="2.0" y="11.0" width="9" height="1.1" fill="#a8a8a8"/></svg>
<svg class="a" style="left:556px;top:251px;" width="14" height="13" viewBox="0 0 14 13"><rect x="0" y="0.5" width="13" height="1.1" fill="#a8a8a8"/><rect x="4" y="4.0" width="9" height="1.1" fill="#a8a8a8"/><rect x="0" y="7.5" width="13" height="1.1" fill="#a8a8a8"/><rect x="4" y="11.0" width="9" height="1.1" fill="#a8a8a8"/></svg>
<svg class="a" style="left:576px;top:251px;" width="14" height="13" viewBox="0 0 14 13"><rect x="0" y="0.5" width="13" height="1.1" fill="#a8a8a8"/><rect x="0" y="4.0" width="13" height="1.1" fill="#a8a8a8"/><rect x="0" y="7.5" width="13" height="1.1" fill="#a8a8a8"/><rect x="0" y="11.0" width="13" height="1.1" fill="#a8a8a8"/></svg>
<div class="a" style="left:596px;top:250px;width:1px;height:17px;background:#d6d6d6"></div>
<svg class="a" style="left:603px;top:252px;" width="14" height="9" viewBox="0 0 14 9"><g fill="#a8a8a8"><rect x="0" y="1" width="6" height="1"/><rect x="0" y="4" width="6" height="1"/><rect x="0" y="7" width="6" height="1"/><rect x="8" y="1" width="6" height="1"/><rect x="8" y="4" width="6" height="1"/><rect x="8" y="7" width="6" height="1"/></g></svg>
<svg class="a" style="left:620px;top:255.5px;" width="6" height="4" viewBox="0 0 6 4"><path d="M0.7 0.8 L3 3 L5.3 0.8" fill="none" stroke="#a8a8a8" stroke-width="1"/></svg>
<svg class="a" style="left:664px;top:237px;" width="14" height="14" viewBox="0 0 14 14"><g fill="none" stroke="#a8a8a8" stroke-width="1"><path d="M3 1 H1 V13 H3 M11 1 H13 V13 H11"/><path d="M7 2 V12 M5.5 3.5 L7 2 L8.5 3.5 M5.5 10.5 L7 12 L8.5 10.5"/></g></svg>
<span class="t" id="t56" style="left:681px;top:238.41px;font-size:10.5px;color:#a8a8a8;font-family:'Liberation Sans',sans-serif;transform:scaleX(0.9865);">Metni Hizala</span>
<svg class="a" style="left:741px;top:241.3px;" width="6" height="4" viewBox="0 0 6 4"><path d="M0.7 0.8 L3 3 L5.3 0.8" fill="none" stroke="#a8a8a8" stroke-width="1"/></svg>
<svg class="a" style="left:664px;top:257px;" width="16" height="14" viewBox="0 0 16 14"><g fill="none" stroke="#a8a8a8" stroke-width="1"><path d="M1 5 L4 1 H12 L9 5Z"/><rect x="5" y="6.5" width="10" height="6.5"/><path d="M7 9.5 H13"/></g></svg>
<span class="t" id="t57" style="left:681px;top:258.91px;font-size:10.5px;color:#a8a8a8;font-family:'Liberation Sans',sans-serif;transform:scaleX(0.9599);">SmartArt'a Dönüştür</span>
<svg class="a" style="left:775px;top:262.6px;" width="6" height="4" viewBox="0 0 6 4"><path d="M0.7 0.8 L3 3 L5.3 0.8" fill="none" stroke="#a8a8a8" stroke-width="1"/></svg>
<span class="t" id="t58" style="left:626px;top:279.76px;font-size:9.5px;color:#555;font-family:'Liberation Sans',sans-serif;transform:scaleX(0.9331);">Paragraf</span>
<svg class="a" style="left:786px;top:281px;" width="8" height="8" viewBox="0 0 8 8"><g fill="none" stroke="#777" stroke-width="0.9"><path d="M0.5 7.5 V0.5 H7.5"/><path d="M3 3 L7 7 M7 4.3 V7 H4.3"/></g></svg>
<div class="a" style="left:803.6px;top:214.6px;width:101px;height:53px;background:#fff;border:1px solid #d6d6d6;box-sizing:border-box"></div>
<div class="a" style="left:904.4px;top:214.6px;width:13.2px;height:53px;background:#f7f7f7;border:1px solid #d6d6d6;box-sizing:border-box"></div>
<div class="a" style="left:904.4px;top:232.4px;width:13.2px;height:1px;background:#d6d6d6"></div>
<div class="a" style="left:904.4px;top:249px;width:13.2px;height:1px;background:#d6d6d6"></div>
<svg class="a" style="left:907px;top:220px;" width="8" height="5" viewBox="0 0 8 5"><path d="M1 4 L4 1 L7 4" fill="none" stroke="#c8c8c8" stroke-width="0.9"/></svg>
<svg class="a" style="left:907px;top:239px;" width="8" height="5" viewBox="0 0 8 5"><path d="M1 1 L4 4 L7 1" fill="none" stroke="#444" stroke-width="1"/></svg>
<svg class="a" style="left:907px;top:254px;" width="8" height="8" viewBox="0 0 8 8"><path d="M1 1.2 H7" stroke="#444" stroke-width="1"/><path d="M1 3.5 L4 6.5 L7 3.5" fill="none" stroke="#444" stroke-width="1"/></svg>
<svg class="a" style="left:803.6px;top:214.6px;" width="101" height="53" viewBox="0 0 101 53"><g fill="none" stroke="#444" stroke-width="1">
<rect x="3.2" y="5" width="12" height="11" stroke="#2f7fc2"/><g fill="#2f7fc2" stroke="none"><rect x="2" y="3.8" width="2.4" height="2.4"/><rect x="14" y="3.8" width="2.4" height="2.4"/><rect x="2" y="14.8" width="2.4" height="2.4"/><rect x="14" y="14.8" width="2.4" height="2.4"/></g>
<path d="M6.5 13 L9.2 7.5 L11.9 13 M7.6 11 H10.8" stroke="#2f7fc2" stroke-width="1.1"/>
<path d="M20 5 L33.5 17"/><path d="M36 5 L49.5 17 M49.5 12.5 V17 H45"/>
<rect x="52" y="6" width="14" height="10"/><ellipse cx="75.5" cy="11" rx="7" ry="5"/><rect x="85.5" y="6" width="14" height="10" rx="2.5"/>
<path d="M4 34 L10 21.5 L16 34Z"/><path d="M20 21.5 H25.5 V34 H33.5"/><path d="M36.5 22 H42 V34 H49.5 M47.5 32 L49.5 34 L47.5 36"/>
<path d="M52 25 H59.5 V21.5 L66.5 28 L59.5 34.5 V31 H52Z"/><path d="M72.5 21.5 H78.5 V29 H82 L75.5 35.5 L69 29 H72.5Z"/><path d="M86 34 V24 Q86 21.5 89 21.5 H94 Q98.5 21.5 99 27 L99.5 29 Q99.5 34 95 34Z"/>
<path d="M5.5 38 Q3 44 7 47 Q11 48 11.5 44 Q12 40 8 42 Q5 45 9 48 Q13 50.5 15 49"/><path d="M20 38.5 Q30 38 33.5 51"/><path d="M36 46 Q39 38 42 40 Q45 43 47 48 Q48.5 51 50 51"/>
<path d="M61 38.5 Q59 38.5 59 41 V43.5 Q59 45 57.5 45 Q59 45 59 46.5 V49 Q59 51.2 61 51.2"/><path d="M76 38.5 Q78 38.5 78 41 V43.5 Q78 45 79.5 45 Q78 45 78 46.5 V49 Q78 51.2 76 51.2"/>
<path d="M92.5 38 L94.3 43 L99.5 43 L95.3 46.2 L97 51.2 L92.5 48.2 L88 51.2 L89.7 46.2 L85.5 43 L90.7 43Z"/></g></svg>
<svg class="a" style="left:926px;top:215px;" width="28" height="27" viewBox="0 0 28 27"><rect x="5" y="5.5" width="17.5" height="16.5" fill="#fbd38a" stroke="#e8862a" stroke-width="1"/><rect x="2.5" y="1.8" width="10.2" height="9.5" fill="#f6f6f6" stroke="#666" stroke-width="1.1"/><rect x="16.5" y="15.5" width="10" height="9.5" fill="#f6f6f6" stroke="#666" stroke-width="1.1"/></svg>
<span class="t" id="t59" style="left:921.7px;top:245.31px;font-size:10.5px;color:#444;font-family:'Liberation Sans',sans-serif;transform:scaleX(0.9668);">Yerleştir</span>
<svg class="a" style="left:937px;top:261.3px;" width="6" height="4" viewBox="0 0 6 4"><path d="M0.7 0.8 L3 3 L5.3 0.8" fill="none" stroke="#666" stroke-width="1"/></svg>
<svg class="a" style="left:966px;top:215px;" width="28" height="27" viewBox="0 0 28 27"><rect x="1.5" y="1" width="24.5" height="24.5" rx="3" fill="#ececec" stroke="#bdbdbd" stroke-width="1.1"/><path d="M24.5 10 L14 22 Q12 25.5 8.5 25 Q9 21.5 12 20 Z" fill="#d2d2d2" stroke="#b5b5b5" stroke-width="0.9"/></svg>
<span class="t" id="t60" style="left:969.7px;top:245.41px;font-size:10.5px;color:#a8a8a8;font-family:'Liberation Sans',sans-serif;transform:scaleX(0.9333);">Hızlı</span>
<span class="t" id="t61" style="left:961.8px;top:258.81px;font-size:10.5px;color:#a8a8a8;font-family:'Liberation Sans',sans-serif;transform:scaleX(0.9709);">Stiller</span>
<svg class="a" style="left:990.5px;top:261.7px;" width="6" height="4" viewBox="0 0 6 4"><path d="M0.7 0.8 L3 3 L5.3 0.8" fill="none" stroke="#a8a8a8" stroke-width="1"/></svg>
<svg class="a" style="left:1001px;top:213px;" width="16" height="16" viewBox="0 0 16 16"><path d="M4 7 L8.5 2.5 L13 7 L8.5 11.5Z" fill="none" stroke="#a8a8a8" stroke-width="1"/><path d="M9 1.5 L11 0.5" stroke="#a8a8a8"/><rect x="1" y="12.5" width="14" height="2.6" fill="#b0b0b0"/></svg>
<span class="t" id="t62" style="left:1019px;top:216.61px;font-size:10.5px;color:#a8a8a8;font-family:'Liberation Sans',sans-serif;transform:scaleX(0.9548);">Şekil Dolgusu</span>
<svg class="a" style="left:1083.5px;top:219.7px;" width="6" height="4" viewBox="0 0 6 4"><path d="M0.7 0.8 L3 3 L5.3 0.8" fill="none" stroke="#a8a8a8" stroke-width="1"/></svg>
<svg class="a" style="left:1001px;top:233px;" width="16" height="16" viewBox="0 0 16 16"><path d="M2 2 H9 M2 2 V11 H12" fill="none" stroke="#a8a8a8" stroke-width="1"/><path d="M6 9.5 L13 2.5 L14.5 4 L7.5 11Z" fill="none" stroke="#a8a8a8" stroke-width="1"/><rect x="1" y="12.5" width="14" height="2.6" fill="#b0b0b0"/></svg>
<span class="t" id="t63" style="left:1019px;top:236.31px;font-size:10.5px;color:#a8a8a8;font-family:'Liberation Sans',sans-serif;transform:scaleX(0.9699);">Şekil Ana Hattı</span>
<svg class="a" style="left:1089px;top:239.7px;" width="6" height="4" viewBox="0 0 6 4"><path d="M0.7 0.8 L3 3 L5.3 0.8" fill="none" stroke="#a8a8a8" stroke-width="1"/></svg>
<svg class="a" style="left:1001px;top:254px;" width="16" height="14" viewBox="0 0 16 14"><path d="M1 8 L6 2 H14.5 L10 8Z M1 8 V12 H10 L14.5 6 V2 M10 8 V12" fill="#e2e2e2" stroke="#a8a8a8" stroke-width="1"/></svg>
<span class="t" id="t64" style="left:1019px;top:256.21px;font-size:10.5px;color:#a8a8a8;font-family:'Liberation Sans',sans-serif;transform:scaleX(0.9495);">Şekil Efektleri</span>
<svg class="a" style="left:1083px;top:259.7px;" width="6" height="4" viewBox="0 0 6 4"><path d="M0.7 0.8 L3 3 L5.3 0.8" fill="none" stroke="#a8a8a8" stroke-width="1"/></svg>
<span class="t" id="t65" style="left:932px;top:279.76px;font-size:9.5px;color:#555;font-family:'Liberation Sans',sans-serif;transform:scaleX(0.9263);">Çizim</span>
<svg class="a" style="left:1096px;top:281px;" width="8" height="8" viewBox="0 0 8 8"><g fill="none" stroke="#777" stroke-width="0.9"><path d="M0.5 7.5 V0.5 H7.5"/><path d="M3 3 L7 7 M7 4.3 V7 H4.3"/></g></svg>
<svg class="a" style="left:1116px;top:214px;" width="16" height="16" viewBox="0 0 16 16"><g fill="none" stroke="#444" stroke-width="1.1"><circle cx="9.7" cy="6" r="4.8"/><path d="M6.2 9.5 L1 14.7"/></g></svg>
<span class="t" id="t66" style="left:1133.5px;top:217.91px;font-size:10.5px;color:#444;font-family:'Liberation Sans',sans-serif;transform:scaleX(0.9218);">Bul</span>
<svg class="a" style="left:1115px;top:234px;" width="16" height="16" viewBox="0 0 16 16"><rect x="5" y="0" width="5" height="7" fill="#f5d5ee"/><text x="5.5" y="6.5" font-size="7" font-family="Liberation Sans" fill="#9b59b6">b</text><text x="10" y="14.5" font-size="7" font-family="Liberation Sans" fill="#1e88e5">c</text><path d="M3.5 4 Q0 8 3 11 L7 11.5 M5 9.5 L7 11.5 L5 13.5" fill="none" stroke="#1e88e5" stroke-width="1"/></svg>
<span class="t" id="t67" style="left:1133.5px;top:238.11px;font-size:10.5px;color:#444;font-family:'Liberation Sans',sans-serif;">Değiştir</span>
<svg class="a" style="left:1177px;top:239.7px;" width="6" height="4" viewBox="0 0 6 4"><path d="M0.7 0.8 L3 3 L5.3 0.8" fill="none" stroke="#666" stroke-width="1"/></svg>
<svg class="a" style="left:1117px;top:253px;" width="12" height="16" viewBox="0 0 12 16"><path d="M1 1 L1 13.5 L4.3 10.5 L6.8 15 L8.8 14 L6.3 9.5 L10.5 9.2Z" fill="#fff" stroke="#444" stroke-width="1"/></svg>
<span class="t" id="t68" style="left:1133.5px;top:257.91px;font-size:10.5px;color:#444;font-family:'Liberation Sans',sans-serif;transform:scaleX(0.8566);">Seç</span>
<svg class="a" style="left:1151.5px;top:259.7px;" width="6" height="4" viewBox="0 0 6 4"><path d="M0.7 0.8 L3 3 L5.3 0.8" fill="none" stroke="#666" stroke-width="1"/></svg>
<span class="t" id="t69" style="left:1129px;top:279.76px;font-size:9.5px;color:#555;font-family:'Liberation Sans',sans-serif;transform:scaleX(0.8947);">Düzenleme</span>
<svg class="a" style="left:1233px;top:219px;" width="20" height="21" viewBox="0 0 20 21"><g fill="none" stroke="#1473e6" stroke-width="1.5"><path d="M9 15.5 H1.5 V1 H8.8 L12.5 4.8 V8"/><path d="M8.5 1 V5 H12.5"/><path d="M7.5 12.5 V19.5 H16.5 V12.5"/><path d="M12 16 V9.5 M9.7 11.7 L12 9.3 L14.3 11.7"/></g></svg>
<span class="t" id="t70" style="left:1216px;top:245.31px;font-size:10.5px;color:#444;font-family:'Liberation Sans',sans-serif;transform:scaleX(0.9488);">Adobe PDF</span>
<span class="t" id="t71" style="left:1204.4px;top:258.91px;font-size:10.5px;color:#444;font-family:'Liberation Sans',sans-serif;transform:scaleX(0.9235);">Oluştur ve Paylaş</span>
<span class="t" id="t72" style="left:1211px;top:279.76px;font-size:9.5px;color:#555;font-family:'Liberation Sans',sans-serif;transform:scaleX(0.9787);">Adobe Acrobat</span>
<svg class="a" style="left:1299px;top:283px;" width="10" height="6" viewBox="0 0 10 6"><path d="M1 5 L5 1 L9 5" fill="none" stroke="#444" stroke-width="1.1"/></svg>
<div class="a" style="left:0px;top:292px;width:1316px;height:506px;background:#e6e6e7"></div>
<div class="a" style="left:197px;top:292px;width:1px;height:506px;background:#c9c9c9"></div>
<svg class="a" style="left:5px;top:310px;" width="8" height="8" viewBox="0 0 8 8"><path d="M7.2 0.8 V7 H1Z" fill="#666"/></svg>
<span class="t" id="t73" style="left:19.3px;top:307.91px;font-size:10.5px;color:#333;font-family:'Liberation Sans',sans-serif;transform:scaleX(0.9593);">Zaman Akış Çizelgeleri</span>
<span class="t" id="t74" style="left:6.5px;top:327.77px;font-size:11.5px;color:#444;font-family:'Liberation Sans',sans-serif;transform:scaleX(0.7024);">1</span>
<span class="t" id="t75" style="left:6.5px;top:430.07px;font-size:11.5px;color:#444;font-family:'Liberation Sans',sans-serif;transform:scaleX(0.7024);">2</span>
<span class="t" id="t76" style="left:6.5px;top:533.47px;font-size:11.5px;color:#c43e1c;font-family:'Liberation Sans',sans-serif;transform:scaleX(0.7493);">3</span>
<div class="a" style="left:25.5px;top:329.3px;width:150px;height:85.5px;background:#fff;border:1px solid #c8c8c8;box-sizing:border-box"></div>
<svg class="a" style="left:25.5px;top:329.3px;" width="150" height="85.5" viewBox="0 0 150 85.5"><path d="M61.5 15 L64.5 12 L66 12 L63 15Z M63.5 17 L69.5 9.8 L71.5 9.8 L65.5 17Z M66.8 17 L72.5 10 L74 10 L68.5 17Z" fill="#1f5fb4"/><text x="76.00" y="12.50" font-size="2.2" font-family="Liberation Sans" font-weight="400" fill="#3b6cc0" opacity="0.8" textLength="13.00" lengthAdjust="spacingAndGlyphs">Yükseköğretim</text><text x="76.00" y="15.50" font-size="2.2" font-family="Liberation Sans" font-weight="400" fill="#3b6cc0" opacity="0.8" textLength="10.00" lengthAdjust="spacingAndGlyphs">Kalite Kurulu</text><text x="44.50" y="29.60" font-size="3.2" font-family="Liberation Sans" font-weight="700" fill="#333" opacity="0.75" textLength="63.00" lengthAdjust="spacingAndGlyphs">Akredite Program Bilgilerinin Toplanması</text><text x="67.50" y="40.00" font-size="2.8" font-family="Liberation Sans" font-weight="400" fill="#3a6fc6" opacity="0.8" textLength="17.00" lengthAdjust="spacingAndGlyphs">24.12.2025</text><rect x="69" y="66.2" width="12.4" height="0.9" fill="#999"/><text x="56.50" y="71.60" font-size="2.8" font-family="Liberation Sans" font-weight="700" fill="#222" opacity="0.8" textLength="36.50" lengthAdjust="spacingAndGlyphs">Prof. Dr. Ümit KOCABIÇAK</text><text x="50.00" y="75.50" font-size="2.5" font-family="Liberation Sans" font-weight="400" fill="#444" opacity="0.7" textLength="49.60" lengthAdjust="spacingAndGlyphs">Yükseköğretim Kalite Kurulu Başkanı</text></svg>
<div class="a" style="left:25.5px;top:432px;width:150px;height:85.3px;background:#fff;border:1px solid #c8c8c8;box-sizing:border-box"></div>
<svg class="a" style="left:25.5px;top:432px;" width="150" height="85.3" viewBox="0 0 150 85.3"><text x="28.30" y="5.80" font-size="2.6" font-family="Liberation Sans" font-weight="700" fill="#3a3ab5" opacity="0.8" textLength="100.70" lengthAdjust="spacingAndGlyphs">AKREDİTE PROGRAMLARIN BİLGİLERİNİN TOPLANMASI VE GÜNCELLENMESİ İLİŞKİN</text><text x="66.20" y="9.50" font-size="2.6" font-family="Liberation Sans" font-weight="700" fill="#3a5ab5" opacity="0.8" textLength="25.30" lengthAdjust="spacingAndGlyphs">USUL VE ESASLAR</text><text x="10.40" y="15.60" font-size="2.7" font-family="Liberation Sans" font-weight="400" fill="#222" opacity="0.6" textLength="130.60" lengthAdjust="spacingAndGlyphs">ilan akredite Kurumlar usul ve akreditasyon süreçleri usul sonuçlarını toplanması Bu esaslar bilgilerini program ve ve esaslar bilgilerini usul kuruluşları güncellenmesi usul</text><text x="10.40" y="18.72" font-size="2.7" font-family="Liberation Sans" font-weight="400" fill="#222" opacity="0.6" textLength="130.60" lengthAdjust="spacingAndGlyphs">Kurumlar usul güncellenmesi Bu tarafından Kurulu program akredite kuruluşları tarafından programların akreditasyon bilgilerinin süreçleri akreditasyon ve usul toplanması değerlendirme bilgilerini ilan girer</text><text x="10.40" y="21.84" font-size="2.7" font-family="Liberation Sans" font-weight="400" fill="#222" opacity="0.6" textLength="28.73" lengthAdjust="spacingAndGlyphs">girer süreçleri tarafından ve</text><text x="10.40" y="24.96" font-size="2.7" font-family="Liberation Sans" font-weight="400" fill="#222" opacity="0.6" textLength="130.60" lengthAdjust="spacingAndGlyphs">programların ve esaslar tarafından paylaşır değerlendirme edilmesine sisteme Kurulu ve kuruluşları sonuçlarını program edilen edilmesine akredite değerlendirme program Bu ve ilan edilmesine</text><text x="10.40" y="28.08" font-size="2.7" font-family="Liberation Sans" font-weight="400" fill="#222" opacity="0.6" textLength="130.60" lengthAdjust="spacingAndGlyphs">ilişkin değerlendirme girer ve esaslar Kalite ve ve usul tarafından sisteme Kurulu düzenlemektir ilişkin 1 girer ilişkin edilen kuruluşları değerlendirme usul toplanması</text><text x="10.40" y="31.20" font-size="2.7" font-family="Liberation Sans" font-weight="400" fill="#222" opacity="0.6" textLength="74.44" lengthAdjust="spacingAndGlyphs">Kurulu tarafından ve Kurumlar Kurumlar değerlendirme esaslar edilen sisteme Kurumlar Kalite tarafından</text><text x="10.40" y="34.32" font-size="2.7" font-family="Liberation Sans" font-weight="400" fill="#222" opacity="0.6" textLength="130.60" lengthAdjust="spacingAndGlyphs">bilgilerini Kalite program ilişkin düzenlemektir güncellenmesi akredite esaslar programların akredite güncellenmesi güncellenmesi Madde değerlendirme programların Yükseköğretim Kurulu Madde akredite program süreçleri ilan</text><text x="10.40" y="37.44" font-size="2.7" font-family="Liberation Sans" font-weight="400" fill="#222" opacity="0.6" textLength="130.60" lengthAdjust="spacingAndGlyphs">tarafından sonuçlarını usul girer Kurumlar Kurumlar Kurumlar Kurumlar akreditasyon ve Kurumlar usul bilgilerinin ve toplanması sisteme edilen kuruluşları edilmesine usul akreditasyon Madde</text><text x="10.40" y="40.56" font-size="2.7" font-family="Liberation Sans" font-weight="400" fill="#222" opacity="0.6" textLength="130.60" lengthAdjust="spacingAndGlyphs">akredite akreditasyon süreçleri 1 ve toplanması düzenlemektir akredite Yükseköğretim ilişkin süreçleri ve kuruluşları kuruluşları değerlendirme girer ve ve tarafından esaslar akredite akreditasyon</text><text x="10.40" y="43.68" font-size="2.7" font-family="Liberation Sans" font-weight="400" fill="#222" opacity="0.6" textLength="92.73" lengthAdjust="spacingAndGlyphs">edilmesine Yükseköğretim ve edilen paylaşır 1 toplanması paylaşır süreçleri akredite 1 paylaşır tarafından esaslar Yükseköğretim</text><text x="10.40" y="46.80" font-size="2.7" font-family="Liberation Sans" font-weight="400" fill="#222" opacity="0.6" textLength="113.62" lengthAdjust="spacingAndGlyphs">paylaşır süreçleri edilen ilişkin güncellenmesi sonuçlarını edilmesine güncellenmesi bilgilerinin ve Kurumlar güncellenmesi bilgilerinin paylaşır değerlendirme ilişkin 1 1 Kalite</text><text x="10.40" y="49.92" font-size="2.7" font-family="Liberation Sans" font-weight="400" fill="#222" opacity="0.6" textLength="108.40" lengthAdjust="spacingAndGlyphs">ve Yükseköğretim bilgilerinin ilişkin sisteme ilişkin süreçleri esaslar güncellenmesi akreditasyon güncellenmesi ve bilgilerinin edilmesine toplanması ve Madde ve</text><text x="10.40" y="53.04" font-size="2.7" font-family="Liberation Sans" font-weight="400" fill="#222" opacity="0.6" textLength="11.75" lengthAdjust="spacingAndGlyphs">ilişkin</text><text x="10.40" y="56.16" font-size="2.7" font-family="Liberation Sans" font-weight="400" fill="#222" opacity="0.6" textLength="130.60" lengthAdjust="spacingAndGlyphs">esaslar kuruluşları düzenlemektir bilgilerinin ve programların bilgilerini edilmesine esaslar Kurumlar girer Kurumlar esaslar edilen edilen tarafından 1 akredite girer akredite ve ilişkin</text><text x="10.40" y="59.28" font-size="2.7" font-family="Liberation Sans" font-weight="400" fill="#222" opacity="0.6" textLength="100.56" lengthAdjust="spacingAndGlyphs">akredite tarafından 1 Madde akreditasyon paylaşır tarafından bilgilerini bilgilerinin toplanması 1 Yükseköğretim toplanması Kurulu sonuçlarını ve</text><text x="10.40" y="62.40" font-size="2.7" font-family="Liberation Sans" font-weight="400" fill="#222" opacity="0.6" textLength="86.20" lengthAdjust="spacingAndGlyphs">ilan Yükseköğretim program tarafından usul ilişkin girer paylaşır program sonuçlarını tarafından akredite paylaşır sonuçlarını</text><text x="10.40" y="65.52" font-size="2.7" font-family="Liberation Sans" font-weight="400" fill="#222" opacity="0.6" textLength="108.40" lengthAdjust="spacingAndGlyphs">1 sisteme programların Madde akredite programların akredite ve kuruluşları usul ilan paylaşır paylaşır ve akreditasyon usul ve bilgilerinin</text><text x="10.40" y="68.64" font-size="2.7" font-family="Liberation Sans" font-weight="400" fill="#222" opacity="0.6" textLength="67.91" lengthAdjust="spacingAndGlyphs">Kalite Bu akreditasyon sonuçlarını sisteme 1 ve sisteme ilan sonuçlarını sonuçlarını</text></svg>
<div class="a" style="left:23px;top:532.4px;width:154px;height:89.5px;background:#fff;border:2.4px solid #c0452a;box-sizing:border-box"></div>
<svg class="a" style="left:23px;top:532.4px;" width="154" height="89.5" viewBox="0 0 154 89.5"><text x="46.80" y="9.40" font-size="3.4" font-family="Liberation Sans" font-weight="700" fill="#2f5eb0" opacity="0.9" textLength="68.00" lengthAdjust="spacingAndGlyphs">Kurum İç Değerlendirme Raporu (KİDR)</text><text x="16.10" y="17.80" font-size="2.6" font-family="Liberation Sans" font-weight="400" fill="#222" opacity="0.7" textLength="131.00" lengthAdjust="spacingAndGlyphs">Yükseköğretim kurumunun; eğitim-öğretim, araştırma ve geliştirme, toplumsal katkı faaliyetleri ile idari</text><text x="16.10" y="22.10" font-size="2.6" font-family="Liberation Sans" font-weight="400" fill="#222" opacity="0.7" textLength="131.00" lengthAdjust="spacingAndGlyphs">hizmetlerine ilişkin kalite güvencesi süreçlerini izlemek amacıyla yükseköğretim kurumu tarafından her yıl</text><text x="16.10" y="26.50" font-size="2.6" font-family="Liberation Sans" font-weight="400" fill="#222" opacity="0.7" textLength="48.00" lengthAdjust="spacingAndGlyphs">bir önceki yıla ilişkin hazırlanan raporu</text><rect x="29.9" y="28.5" width="106.1" height="55.9" fill="#7f7fb8"/><rect x="65" y="31.3" width="35.6" height="1.1" fill="#e8e8f5" opacity=".6"/><rect x="35.60" y="37.50" width="15" height="13" rx="0.6" fill="#fecb63"/><rect x="40.10" y="39.50" width="6" height="5.5" fill="none" stroke="#fff" stroke-width="0.8" opacity=".75"/><rect x="39.10" y="47.00" width="8" height="0.9" fill="#fff" opacity=".6"/><rect x="62.15" y="37.50" width="15" height="13" rx="0.6" fill="#e8590c"/><rect x="66.65" y="39.50" width="6" height="5.5" fill="none" stroke="#fff" stroke-width="0.8" opacity=".75"/><rect x="65.65" y="47.00" width="8" height="0.9" fill="#fff" opacity=".6"/><rect x="88.70" y="37.50" width="15" height="13" rx="0.6" fill="#65aad8"/><rect x="93.20" y="39.50" width="6" height="5.5" fill="none" stroke="#fff" stroke-width="0.8" opacity=".75"/><rect x="92.20" y="47.00" width="8" height="0.9" fill="#fff" opacity=".6"/><rect x="115.25" y="37.50" width="15" height="13" rx="0.6" fill="#92d050"/><rect x="119.75" y="39.50" width="6" height="5.5" fill="none" stroke="#fff" stroke-width="0.8" opacity=".75"/><rect x="118.75" y="47.00" width="8" height="0.9" fill="#fff" opacity=".6"/><rect x="35.60" y="52.70" width="15" height="13" rx="0.6" fill="#8e96fb"/><rect x="40.10" y="54.70" width="6" height="5.5" fill="none" stroke="#fff" stroke-width="0.8" opacity=".75"/><rect x="39.10" y="62.20" width="8" height="0.9" fill="#fff" opacity=".6"/><rect x="62.15" y="52.70" width="15" height="13" rx="0.6" fill="#7d7c3c"/><rect x="66.65" y="54.70" width="6" height="5.5" fill="none" stroke="#fff" stroke-width="0.8" opacity=".75"/><rect x="65.65" y="62.20" width="8" height="0.9" fill="#fff" opacity=".6"/><rect x="88.70" y="52.70" width="15" height="13" rx="0.6" fill="#04a29c"/><rect x="93.20" y="54.70" width="6" height="5.5" fill="none" stroke="#fff" stroke-width="0.8" opacity=".75"/><rect x="92.20" y="62.20" width="8" height="0.9" fill="#fff" opacity=".6"/><rect x="115.25" y="52.70" width="15" height="13" rx="0.6" fill="#7c63c1"/><rect x="119.75" y="54.70" width="6" height="5.5" fill="none" stroke="#fff" stroke-width="0.8" opacity=".75"/><rect x="118.75" y="62.20" width="8" height="0.9" fill="#fff" opacity=".6"/><rect x="35.60" y="67.90" width="15" height="13" rx="0.6" fill="#92d050"/><rect x="40.10" y="69.90" width="6" height="5.5" fill="none" stroke="#fff" stroke-width="0.8" opacity=".75"/><rect x="39.10" y="77.40" width="8" height="0.9" fill="#fff" opacity=".6"/></svg>
<svg class="a" style="left:340px;top:296px;" width="843" height="11" viewBox="0 0 843 11"><rect width="843" height="11" fill="#fff"/><rect x="9.30" y="3.5" width="0.9" height="4.5" fill="#555"/><rect x="12.46" y="5.5" width="0.8" height="1" fill="#999"/><rect x="15.58" y="4.5" width="0.8" height="3" fill="#777"/><rect x="18.69" y="5.5" width="0.8" height="1" fill="#999"/><text x="22.20" y="8.9" font-size="9.8" text-anchor="middle" font-family="Liberation Sans" fill="#333">32</text><rect x="24.91" y="5.5" width="0.8" height="1" fill="#999"/><rect x="28.03" y="4.5" width="0.8" height="3" fill="#777"/><rect x="31.14" y="5.5" width="0.8" height="1" fill="#999"/><rect x="34.20" y="3.5" width="0.9" height="4.5" fill="#555"/><rect x="37.36" y="5.5" width="0.8" height="1" fill="#999"/><rect x="40.48" y="4.5" width="0.8" height="3" fill="#777"/><rect x="43.59" y="5.5" width="0.8" height="1" fill="#999"/><text x="47.10" y="8.9" font-size="9.8" text-anchor="middle" font-family="Liberation Sans" fill="#333">30</text><rect x="49.81" y="5.5" width="0.8" height="1" fill="#999"/><rect x="52.93" y="4.5" width="0.8" height="3" fill="#777"/><rect x="56.04" y="5.5" width="0.8" height="1" fill="#999"/><rect x="59.10" y="3.5" width="0.9" height="4.5" fill="#555"/><rect x="62.26" y="5.5" width="0.8" height="1" fill="#999"/><rect x="65.38" y="4.5" width="0.8" height="3" fill="#777"/><rect x="68.49" y="5.5" width="0.8" height="1" fill="#999"/><text x="72.00" y="8.9" font-size="9.8" text-anchor="middle" font-family="Liberation Sans" fill="#333">28</text><rect x="74.71" y="5.5" width="0.8" height="1" fill="#999"/><rect x="77.83" y="4.5" width="0.8" height="3" fill="#777"/><rect x="80.94" y="5.5" width="0.8" height="1" fill="#999"/><rect x="84.00" y="3.5" width="0.9" height="4.5" fill="#555"/><rect x="87.16" y="5.5" width="0.8" height="1" fill="#999"/><rect x="90.28" y="4.5" width="0.8" height="3" fill="#777"/><rect x="93.39" y="5.5" width="0.8" height="1" fill="#999"/><text x="96.90" y="8.9" font-size="9.8" text-anchor="middle" font-family="Liberation Sans" fill="#333">26</text><rect x="99.61" y="5.5" width="0.8" height="1" fill="#999"/><rect x="102.73" y="4.5" width="0.8" height="3" fill="#777"/><rect x="105.84" y="5.5" width="0.8" height="1" fill="#999"/><rect x="108.90" y="3.5" width="0.9" height="4.5" fill="#555"/><rect x="112.06" y="5.5" width="0.8" height="1" fill="#999"/><rect x="115.18" y="4.5" width="0.8" height="3" fill="#777"/><rect x="118.29" y="5.5" width="0.8" height="1" fill="#999"/><text x="121.80" y="8.9" font-size="9.8" text-anchor="middle" font-family="Liberation Sans" fill="#333">24</text><rect x="124.51" y="5.5" width="0.8" height="1" fill="#999"/><rect x="127.63" y="4.5" width="0.8" height="3" fill="#777"/><rect x="130.74" y="5.5" width="0.8" height="1" fill="#999"/><rect x="133.80" y="3.5" width="0.9" height="4.5" fill="#555"/><rect x="136.96" y="5.5" width="0.8" height="1" fill="#999"/><rect x="140.08" y="4.5" width="0.8" height="3" fill="#777"/><rect x="143.19" y="5.5" width="0.8" height="1" fill="#999"/><text x="146.70" y="8.9" font-size="9.8" text-anchor="middle" font-family="Liberation Sans" fill="#333">22</text><rect x="149.41" y="5.5" width="0.8" height="1" fill="#999"/><rect x="152.53" y="4.5" width="0.8" height="3" fill="#777"/><rect x="155.64" y="5.5" width="0.8" height="1" fill="#999"/><rect x="158.70" y="3.5" width="0.9" height="4.5" fill="#555"/><rect x="161.86" y="5.5" width="0.8" height="1" fill="#999"/><rect x="164.98" y="4.5" width="0.8" height="3" fill="#777"/><rect x="168.09" y="5.5" width="0.8" height="1" fill="#999"/><text x="171.60" y="8.9" font-size="9.8" text-anchor="middle" font-family="Liberation Sans" fill="#333">20</text><rect x="174.31" y="5.5" width="0.8" height="1" fill="#999"/><rect x="177.43" y="4.5" width="0.8" height="3" fill="#777"/><rect x="180.54" y="5.5" width="0.8" height="1" fill="#999"/><rect x="183.60" y="3.5" width="0.9" height="4.5" fill="#555"/><rect x="186.76" y="5.5" width="0.8" height="1" fill="#999"/><rect x="189.88" y="4.5" width="0.8" height="3" fill="#777"/><rect x="192.99" y="5.5" width="0.8" height="1" fill="#999"/><text x="196.50" y="8.9" font-size="9.8" text-anchor="middle" font-family="Liberation Sans" fill="#333">18</text><rect x="199.21" y="5.5" width="0.8" height="1" fill="#999"/><rect x="202.33" y="4.5" width="0.8" height="3" fill="#777"/><rect x="205.44" y="5.5" width="0.8" height="1" fill="#999"/><rect x="208.50" y="3.5" width="0.9" height="4.5" fill="#555"/><rect x="211.66" y="5.5" width="0.8" height="1" fill="#999"/><rect x="214.78" y="4.5" width="0.8" height="3" fill="#777"/><rect x="217.89" y="5.5" width="0.8" height="1" fill="#999"/><text x="221.40" y="8.9" font-size="9.8" text-anchor="middle" font-family="Liberation Sans" fill="#333">16</text><rect x="224.11" y="5.5" width="0.8" height="1" fill="#999"/><rect x="227.23" y="4.5" width="0.8" height="3" fill="#777"/><rect x="230.34" y="5.5" width="0.8" height="1" fill="#999"/><rect x="233.40" y="3.5" width="0.9" height="4.5" fill="#555"/><rect x="236.56" y="5.5" width="0.8" height="1" fill="#999"/><rect x="239.68" y="4.5" width="0.8" height="3" fill="#777"/><rect x="242.79" y="5.5" width="0.8" height="1" fill="#999"/><text x="246.30" y="8.9" font-size="9.8" text-anchor="middle" font-family="Liberation Sans" fill="#333">14</text><rect x="249.01" y="5.5" width="0.8" height="1" fill="#999"/><rect x="252.13" y="4.5" width="0.8" height="3" fill="#777"/><rect x="255.24" y="5.5" width="0.8" height="1" fill="#999"/><rect x="258.30" y="3.5" width="0.9" height="4.5" fill="#555"/><rect x="261.46" y="5.5" width="0.8" height="1" fill="#999"/><rect x="264.58" y="4.5" width="0.8" height="3" fill="#777"/><rect x="267.69" y="5.5" width="0.8" height="1" fill="#999"/><text x="271.20" y="8.9" font-size="9.8" text-anchor="middle" font-family="Liberation Sans" fill="#333">12</text><rect x="273.91" y="5.5" width="0.8" height="1" fill="#999"/><rect x="277.03" y="4.5" width="0.8" height="3" fill="#777"/><rect x="280.14" y="5.5" width="0.8" height="1" fill="#999"/><rect x="283.20" y="3.5" width="0.9" height="4.5" fill="#555"/><rect x="286.36" y="5.5" width="0.8" height="1" fill="#999"/><rect x="289.48" y="4.5" width="0.8" height="3" fill="#777"/><rect x="292.59" y="5.5" width="0.8" height="1" fill="#999"/><text x="296.10" y="8.9" font-size="9.8" text-anchor="middle" font-family="Liberation Sans" fill="#333">10</text><rect x="298.81" y="5.5" width="0.8" height="1" fill="#999"/><rect x="301.93" y="4.5" width="0.8" height="3" fill="#777"/><rect x="305.04" y="5.5" width="0.8" height="1" fill="#999"/><rect x="308.10" y="3.5" width="0.9" height="4.5" fill="#555"/><rect x="311.26" y="5.5" width="0.8" height="1" fill="#999"/><rect x="314.38" y="4.5" width="0.8" height="3" fill="#777"/><rect x="317.49" y="5.5" width="0.8" height="1" fill="#999"/><text x="321.00" y="8.9" font-size="9.8" text-anchor="middle" font-family="Liberation Sans" fill="#333">8</text><rect x="323.71" y="5.5" width="0.8" height="1" fill="#999"/><rect x="326.83" y="4.5" width="0.8" height="3" fill="#777"/><rect x="329.94" y="5.5" width="0.8" height="1" fill="#999"/><rect x="333.00" y="3.5" width="0.9" height="4.5" fill="#555"/><rect x="336.16" y="5.5" width="0.8" height="1" fill="#999"/><rect x="339.28" y="4.5" width="0.8" height="3" fill="#777"/><rect x="342.39" y="5.5" width="0.8" height="1" fill="#999"/><text x="345.90" y="8.9" font-size="9.8" text-anchor="middle" font-family="Liberation Sans" fill="#333">6</text><rect x="348.61" y="5.5" width="0.8" height="1" fill="#999"/><rect x="351.73" y="4.5" width="0.8" height="3" fill="#777"/><rect x="354.84" y="5.5" width="0.8" height="1" fill="#999"/><rect x="357.90" y="3.5" width="0.9" height="4.5" fill="#555"/><rect x="361.06" y="5.5" width="0.8" height="1" fill="#999"/><rect x="364.18" y="4.5" width="0.8" height="3" fill="#777"/><rect x="367.29" y="5.5" width="0.8" height="1" fill="#999"/><text x="370.80" y="8.9" font-size="9.8" text-anchor="middle" font-family="Liberation Sans" fill="#333">4</text><rect x="373.51" y="5.5" width="0.8" height="1" fill="#999"/><rect x="376.63" y="4.5" width="0.8" height="3" fill="#777"/><rect x="379.74" y="5.5" width="0.8" height="1" fill="#999"/><rect x="382.80" y="3.5" width="0.9" height="4.5" fill="#555"/><rect x="385.96" y="5.5" width="0.8" height="1" fill="#999"/><rect x="389.08" y="4.5" width="0.8" height="3" fill="#777"/><rect x="392.19" y="5.5" width="0.8" height="1" fill="#999"/><text x="395.70" y="8.9" font-size="9.8" text-anchor="middle" font-family="Liberation Sans" fill="#333">2</text><rect x="398.41" y="5.5" width="0.8" height="1" fill="#999"/><rect x="401.53" y="4.5" width="0.8" height="3" fill="#777"/><rect x="404.64" y="5.5" width="0.8" height="1" fill="#999"/><rect x="407.70" y="3.5" width="0.9" height="4.5" fill="#555"/><rect x="410.86" y="5.5" width="0.8" height="1" fill="#999"/><rect x="413.98" y="4.5" width="0.8" height="3" fill="#777"/><rect x="417.09" y="5.5" width="0.8" height="1" fill="#999"/><text x="420.60" y="8.9" font-size="9.8" text-anchor="middle" font-family="Liberation Sans" fill="#333">0</text><rect x="423.31" y="5.5" width="0.8" height="1" fill="#999"/><rect x="426.43" y="4.5" width="0.8" height="3" fill="#777"/><rect x="429.54" y="5.5" width="0.8" height="1" fill="#999"/><rect x="432.60" y="3.5" width="0.9" height="4.5" fill="#555"/><rect x="435.76" y="5.5" width="0.8" height="1" fill="#999"/><rect x="438.88" y="4.5" width="0.8" height="3" fill="#777"/><rect x="441.99" y="5.5" width="0.8" height="1" fill="#999"/><text x="445.50" y="8.9" font-size="9.8" text-anchor="middle" font-family="Liberation Sans" fill="#333">2</text><rect x="448.21" y="5.5" width="0.8" height="1" fill="#999"/><rect x="451.33" y="4.5" width="0.8" height="3" fill="#777"/><rect x="454.44" y="5.5" width="0.8" height="1" fill="#999"/><rect x="457.50" y="3.5" width="0.9" height="4.5" fill="#555"/><rect x="460.66" y="5.5" width="0.8" height="1" fill="#999"/><rect x="463.78" y="4.5" width="0.8" height="3" fill="#777"/><rect x="466.89" y="5.5" width="0.8" height="1" fill="#999"/><text x="470.40" y="8.9" font-size="9.8" text-anchor="middle" font-family="Liberation Sans" fill="#333">4</text><rect x="473.11" y="5.5" width="0.8" height="1" fill="#999"/><rect x="476.23" y="4.5" width="0.8" height="3" fill="#777"/><rect x="479.34" y="5.5" width="0.8" height="1" fill="#999"/><rect x="482.40" y="3.5" width="0.9" height="4.5" fill="#555"/><rect x="485.56" y="5.5" width="0.8" height="1" fill="#999"/><rect x="488.68" y="4.5" width="0.8" height="3" fill="#777"/><rect x="491.79" y="5.5" width="0.8" height="1" fill="#999"/><text x="495.30" y="8.9" font-size="9.8" text-anchor="middle" font-family="Liberation Sans" fill="#333">6</text><rect x="498.01" y="5.5" width="0.8" height="1" fill="#999"/><rect x="501.13" y="4.5" width="0.8" height="3" fill="#777"/><rect x="504.24" y="5.5" width="0.8" height="1" fill="#999"/><rect x="507.30" y="3.5" width="0.9" height="4.5" fill="#555"/><rect x="510.46" y="5.5" width="0.8" height="1" fill="#999"/><rect x="513.58" y="4.5" width="0.8" height="3" fill="#777"/><rect x="516.69" y="5.5" width="0.8" height="1" fill="#999"/><text x="520.20" y="8.9" font-size="9.8" text-anchor="middle" font-family="Liberation Sans" fill="#333">8</text><rect x="522.91" y="5.5" width="0.8" height="1" fill="#999"/><rect x="526.02" y="4.5" width="0.8" height="3" fill="#777"/><rect x="529.14" y="5.5" width="0.8" height="1" fill="#999"/><rect x="532.20" y="3.5" width="0.9" height="4.5" fill="#555"/><rect x="535.36" y="5.5" width="0.8" height="1" fill="#999"/><rect x="538.48" y="4.5" width="0.8" height="3" fill="#777"/><rect x="541.59" y="5.5" width="0.8" height="1" fill="#999"/><text x="545.10" y="8.9" font-size="9.8" text-anchor="middle" font-family="Liberation Sans" fill="#333">10</text><rect x="547.81" y="5.5" width="0.8" height="1" fill="#999"/><rect x="550.93" y="4.5" width="0.8" height="3" fill="#777"/><rect x="554.04" y="5.5" width="0.8" height="1" fill="#999"/><rect x="557.10" y="3.5" width="0.9" height="4.5" fill="#555"/><rect x="560.26" y="5.5" width="0.8" height="1" fill="#999"/><rect x="563.38" y="4.5" width="0.8" height="3" fill="#777"/><rect x="566.49" y="5.5" width="0.8" height="1" fill="#999"/><text x="570.00" y="8.9" font-size="9.8" text-anchor="middle" font-family="Liberation Sans" fill="#333">12</text><rect x="572.71" y="5.5" width="0.8" height="1" fill="#999"/><rect x="575.83" y="4.5" width="0.8" height="3" fill="#777"/><rect x="578.94" y="5.5" width="0.8" height="1" fill="#999"/><rect x="582.00" y="3.5" width="0.9" height="4.5" fill="#555"/><rect x="585.16" y="5.5" width="0.8" height="1" fill="#999"/><rect x="588.27" y="4.5" width="0.8" height="3" fill="#777"/><rect x="591.39" y="5.5" width="0.8" height="1" fill="#999"/><text x="594.90" y="8.9" font-size="9.8" text-anchor="middle" font-family="Liberation Sans" fill="#333">14</text><rect x="597.61" y="5.5" width="0.8" height="1" fill="#999"/><rect x="600.73" y="4.5" width="0.8" height="3" fill="#777"/><rect x="603.84" y="5.5" width="0.8" height="1" fill="#999"/><rect x="606.90" y="3.5" width="0.9" height="4.5" fill="#555"/><rect x="610.06" y="5.5" width="0.8" height="1" fill="#999"/><rect x="613.18" y="4.5" width="0.8" height="3" fill="#777"/><rect x="616.29" y="5.5" width="0.8" height="1" fill="#999"/><text x="619.80" y="8.9" font-size="9.8" text-anchor="middle" font-family="Liberation Sans" fill="#333">16</text><rect x="622.51" y="5.5" width="0.8" height="1" fill="#999"/><rect x="625.62" y="4.5" width="0.8" height="3" fill="#777"/><rect x="628.74" y="5.5" width="0.8" height="1" fill="#999"/><rect x="631.80" y="3.5" width="0.9" height="4.5" fill="#555"/><rect x="634.96" y="5.5" width="0.8" height="1" fill="#999"/><rect x="638.08" y="4.5" width="0.8" height="3" fill="#777"/><rect x="641.19" y="5.5" width="0.8" height="1" fill="#999"/><text x="644.70" y="8.9" font-size="9.8" text-anchor="middle" font-family="Liberation Sans" fill="#333">18</text><rect x="647.41" y="5.5" width="0.8" height="1" fill="#999"/><rect x="650.52" y="4.5" width="0.8" height="3" fill="#777"/><rect x="653.64" y="5.5" width="0.8" height="1" fill="#999"/><rect x="656.70" y="3.5" width="0.9" height="4.5" fill="#555"/><rect x="659.86" y="5.5" width="0.8" height="1" fill="#999"/><rect x="662.98" y="4.5" width="0.8" height="3" fill="#777"/><rect x="666.09" y="5.5" width="0.8" height="1" fill="#999"/><text x="669.60" y="8.9" font-size="9.8" text-anchor="middle" font-family="Liberation Sans" fill="#333">20</text><rect x="672.31" y="5.5" width="0.8" height="1" fill="#999"/><rect x="675.43" y="4.5" width="0.8" height="3" fill="#777"/><rect x="678.54" y="5.5" width="0.8" height="1" fill="#999"/><rect x="681.60" y="3.5" width="0.9" height="4.5" fill="#555"/><rect x="684.76" y="5.5" width="0.8" height="1" fill="#999"/><rect x="687.88" y="4.5" width="0.8" height="3" fill="#777"/><rect x="690.99" y="5.5" width="0.8" height="1" fill="#999"/><text x="694.50" y="8.9" font-size="9.8" text-anchor="middle" font-family="Liberation Sans" fill="#333">22</text><rect x="697.21" y="5.5" width="0.8" height="1" fill="#999"/><rect x="700.33" y="4.5" width="0.8" height="3" fill="#777"/><rect x="703.44" y="5.5" width="0.8" height="1" fill="#999"/><rect x="706.50" y="3.5" width="0.9" height="4.5" fill="#555"/><rect x="709.66" y="5.5" width="0.8" height="1" fill="#999"/><rect x="712.77" y="4.5" width="0.8" height="3" fill="#777"/><rect x="715.89" y="5.5" width="0.8" height="1" fill="#999"/><text x="719.40" y="8.9" font-size="9.8" text-anchor="middle" font-family="Liberation Sans" fill="#333">24</text><rect x="722.11" y="5.5" width="0.8" height="1" fill="#999"/><rect x="725.23" y="4.5" width="0.8" height="3" fill="#777"/><rect x="728.34" y="5.5" width="0.8" height="1" fill="#999"/><rect x="731.40" y="3.5" width="0.9" height="4.5" fill="#555"/><rect x="734.56" y="5.5" width="0.8" height="1" fill="#999"/><rect x="737.68" y="4.5" width="0.8" height="3" fill="#777"/><rect x="740.79" y="5.5" width="0.8" height="1" fill="#999"/><text x="744.30" y="8.9" font-size="9.8" text-anchor="middle" font-family="Liberation Sans" fill="#333">26</text><rect x="747.01" y="5.5" width="0.8" height="1" fill="#999"/><rect x="750.12" y="4.5" width="0.8" height="3" fill="#777"/><rect x="753.24" y="5.5" width="0.8" height="1" fill="#999"/><rect x="756.30" y="3.5" width="0.9" height="4.5" fill="#555"/><rect x="759.46" y="5.5" width="0.8" height="1" fill="#999"/><rect x="762.58" y="4.5" width="0.8" height="3" fill="#777"/><rect x="765.69" y="5.5" width="0.8" height="1" fill="#999"/><text x="769.20" y="8.9" font-size="9.8" text-anchor="middle" font-family="Liberation Sans" fill="#333">28</text><rect x="771.91" y="5.5" width="0.8" height="1" fill="#999"/><rect x="775.02" y="4.5" width="0.8" height="3" fill="#777"/><rect x="778.14" y="5.5" width="0.8" height="1" fill="#999"/><rect x="781.20" y="3.5" width="0.9" height="4.5" fill="#555"/><rect x="784.36" y="5.5" width="0.8" height="1" fill="#999"/><rect x="787.48" y="4.5" width="0.8" height="3" fill="#777"/><rect x="790.59" y="5.5" width="0.8" height="1" fill="#999"/><text x="794.10" y="8.9" font-size="9.8" text-anchor="middle" font-family="Liberation Sans" fill="#333">30</text><rect x="796.81" y="5.5" width="0.8" height="1" fill="#999"/><rect x="799.93" y="4.5" width="0.8" height="3" fill="#777"/><rect x="803.04" y="5.5" width="0.8" height="1" fill="#999"/><rect x="806.10" y="3.5" width="0.9" height="4.5" fill="#555"/><rect x="809.26" y="5.5" width="0.8" height="1" fill="#999"/><rect x="812.38" y="4.5" width="0.8" height="3" fill="#777"/><rect x="815.49" y="5.5" width="0.8" height="1" fill="#999"/><text x="819.00" y="8.9" font-size="9.8" text-anchor="middle" font-family="Liberation Sans" fill="#333">32</text><rect x="821.71" y="5.5" width="0.8" height="1" fill="#999"/><rect x="824.83" y="4.5" width="0.8" height="3" fill="#777"/><rect x="827.94" y="5.5" width="0.8" height="1" fill="#999"/><rect x="831.00" y="3.5" width="0.9" height="4.5" fill="#555"/></svg>
<svg class="a" style="left:203px;top:323.8px;" width="11.4" height="474.2" viewBox="0 0 11.4 474.2"><rect width="11.4" height="474.2" fill="#fff"/><rect x="5" y="1.63" width="1" height="0.8" fill="#999"/><rect x="4" y="4.75" width="3" height="0.8" fill="#777"/><rect x="5" y="7.88" width="1" height="0.8" fill="#999"/><text x="0" y="0" transform="translate(8.8 11.40) rotate(-90)" font-size="9.8" text-anchor="middle" font-family="Liberation Sans" fill="#333">18</text><rect x="5" y="14.13" width="1" height="0.8" fill="#999"/><rect x="4" y="17.25" width="3" height="0.8" fill="#777"/><rect x="5" y="20.38" width="1" height="0.8" fill="#999"/><rect x="3.5" y="23.45" width="4.5" height="0.9" fill="#555"/><rect x="5" y="26.63" width="1" height="0.8" fill="#999"/><rect x="4" y="29.75" width="3" height="0.8" fill="#777"/><rect x="5" y="32.88" width="1" height="0.8" fill="#999"/><text x="0" y="0" transform="translate(8.8 36.40) rotate(-90)" font-size="9.8" text-anchor="middle" font-family="Liberation Sans" fill="#333">16</text><rect x="5" y="39.13" width="1" height="0.8" fill="#999"/><rect x="4" y="42.25" width="3" height="0.8" fill="#777"/><rect x="5" y="45.38" width="1" height="0.8" fill="#999"/><rect x="3.5" y="48.45" width="4.5" height="0.9" fill="#555"/><rect x="5" y="51.63" width="1" height="0.8" fill="#999"/><rect x="4" y="54.75" width="3" height="0.8" fill="#777"/><rect x="5" y="57.88" width="1" height="0.8" fill="#999"/><text x="0" y="0" transform="translate(8.8 61.40) rotate(-90)" font-size="9.8" text-anchor="middle" font-family="Liberation Sans" fill="#333">14</text><rect x="5" y="64.13" width="1" height="0.8" fill="#999"/><rect x="4" y="67.25" width="3" height="0.8" fill="#777"/><rect x="5" y="70.38" width="1" height="0.8" fill="#999"/><rect x="3.5" y="73.45" width="4.5" height="0.9" fill="#555"/><rect x="5" y="76.63" width="1" height="0.8" fill="#999"/><rect x="4" y="79.75" width="3" height="0.8" fill="#777"/><rect x="5" y="82.88" width="1" height="0.8" fill="#999"/><text x="0" y="0" transform="translate(8.8 86.40) rotate(-90)" font-size="9.8" text-anchor="middle" font-family="Liberation Sans" fill="#333">12</text><rect x="5" y="89.13" width="1" height="0.8" fill="#999"/><rect x="4" y="92.25" width="3" height="0.8" fill="#777"/><rect x="5" y="95.38" width="1" height="0.8" fill="#999"/><rect x="3.5" y="98.45" width="4.5" height="0.9" fill="#555"/><rect x="5" y="101.63" width="1" height="0.8" fill="#999"/><rect x="4" y="104.75" width="3" height="0.8" fill="#777"/><rect x="5" y="107.88" width="1" height="0.8" fill="#999"/><text x="0" y="0" transform="translate(8.8 111.40) rotate(-90)" font-size="9.8" text-anchor="middle" font-family="Liberation Sans" fill="#333">10</text><rect x="5" y="114.13" width="1" height="0.8" fill="#999"/><rect x="4" y="117.25" width="3" height="0.8" fill="#777"/><rect x="5" y="120.38" width="1" height="0.8" fill="#999"/><rect x="3.5" y="123.45" width="4.5" height="0.9" fill="#555"/><rect x="5" y="126.63" width="1" height="0.8" fill="#999"/><rect x="4" y="129.75" width="3" height="0.8" fill="#777"/><rect x="5" y="132.88" width="1" height="0.8" fill="#999"/><text x="0" y="0" transform="translate(8.8 136.40) rotate(-90)" font-size="9.8" text-anchor="middle" font-family="Liberation Sans" fill="#333">8</text><rect x="5" y="139.13" width="1" height="0.8" fill="#999"/><rect x="4" y="142.25" width="3" height="0.8" fill="#777"/><rect x="5" y="145.38" width="1" height="0.8" fill="#999"/><rect x="3.5" y="148.45" width="4.5" height="0.9" fill="#555"/><rect x="5" y="151.63" width="1" height="0.8" fill="#999"/><rect x="4" y="154.75" width="3" height="0.8" fill="#777"/><rect x="5" y="157.88" width="1" height="0.8" fill="#999"/><text x="0" y="0" transform="translate(8.8 161.40) rotate(-90)" font-size="9.8" text-anchor="middle" font-family="Liberation Sans" fill="#333">6</text><rect x="5" y="164.13" width="1" height="0.8" fill="#999"/><rect x="4" y="167.25" width="3" height="0.8" fill="#777"/><rect x="5" y="170.38" width="1" height="0.8" fill="#999"/><rect x="3.5" y="173.45" width="4.5" height="0.9" fill="#555"/><rect x="5" y="176.63" width="1" height="0.8" fill="#999"/><rect x="4" y="179.75" width="3" height="0.8" fill="#777"/><rect x="5" y="182.88" width="1" height="0.8" fill="#999"/><text x="0" y="0" transform="translate(8.8 186.40) rotate(-90)" font-size="9.8" text-anchor="middle" font-family="Liberation Sans" fill="#333">4</text><rect x="5" y="189.13" width="1" height="0.8" fill="#999"/><rect x="4" y="192.25" width="3" height="0.8" fill="#777"/><rect x="5" y="195.38" width="1" height="0.8" fill="#999"/><rect x="3.5" y="198.45" width="4.5" height="0.9" fill="#555"/><rect x="5" y="201.63" width="1" height="0.8" fill="#999"/><rect x="4" y="204.75" width="3" height="0.8" fill="#777"/><rect x="5" y="207.88" width="1" height="0.8" fill="#999"/><text x="0" y="0" transform="translate(8.8 211.40) rotate(-90)" font-size="9.8" text-anchor="middle" font-family="Liberation Sans" fill="#333">2</text><rect x="5" y="214.13" width="1" height="0.8" fill="#999"/><rect x="4" y="217.25" width="3" height="0.8" fill="#777"/><rect x="5" y="220.38" width="1" height="0.8" fill="#999"/><rect x="3.5" y="223.45" width="4.5" height="0.9" fill="#555"/><rect x="5" y="226.63" width="1" height="0.8" fill="#999"/><rect x="4" y="229.75" width="3" height="0.8" fill="#777"/><rect x="5" y="232.88" width="1" height="0.8" fill="#999"/><text x="0" y="0" transform="translate(8.8 236.40) rotate(-90)" font-size="9.8" text-anchor="middle" font-family="Liberation Sans" fill="#333">0</text><rect x="5" y="239.13" width="1" height="0.8" fill="#999"/><rect x="4" y="242.25" width="3" height="0.8" fill="#777"/><rect x="5" y="245.38" width="1" height="0.8" fill="#999"/><rect x="3.5" y="248.45" width="4.5" height="0.9" fill="#555"/><rect x="5" y="251.63" width="1" height="0.8" fill="#999"/><rect x="4" y="254.75" width="3" height="0.8" fill="#777"/><rect x="5" y="257.88" width="1" height="0.8" fill="#999"/><text x="0" y="0" transform="translate(8.8 261.40) rotate(-90)" font-size="9.8" text-anchor="middle" font-family="Liberation Sans" fill="#333">2</text><rect x="5" y="264.13" width="1" height="0.8" fill="#999"/><rect x="4" y="267.25" width="3" height="0.8" fill="#777"/><rect x="5" y="270.38" width="1" height="0.8" fill="#999"/><rect x="3.5" y="273.45" width="4.5" height="0.9" fill="#555"/><rect x="5" y="276.63" width="1" height="0.8" fill="#999"/><rect x="4" y="279.75" width="3" height="0.8" fill="#777"/><rect x="5" y="282.88" width="1" height="0.8" fill="#999"/><text x="0" y="0" transform="translate(8.8 286.40) rotate(-90)" font-size="9.8" text-anchor="middle" font-family="Liberation Sans" fill="#333">4</text><rect x="5" y="289.13" width="1" height="0.8" fill="#999"/><rect x="4" y="292.25" width="3" height="0.8" fill="#777"/><rect x="5" y="295.38" width="1" height="0.8" fill="#999"/><rect x="3.5" y="298.45" width="4.5" height="0.9" fill="#555"/><rect x="5" y="301.63" width="1" height="0.8" fill="#999"/><rect x="4" y="304.75" width="3" height="0.8" fill="#777"/><rect x="5" y="307.88" width="1" height="0.8" fill="#999"/><text x="0" y="0" transform="translate(8.8 311.40) rotate(-90)" font-size="9.8" text-anchor="middle" font-family="Liberation Sans" fill="#333">6</text><rect x="5" y="314.13" width="1" height="0.8" fill="#999"/><rect x="4" y="317.25" width="3" height="0.8" fill="#777"/><rect x="5" y="320.38" width="1" height="0.8" fill="#999"/><rect x="3.5" y="323.45" width="4.5" height="0.9" fill="#555"/><rect x="5" y="326.63" width="1" height="0.8" fill="#999"/><rect x="4" y="329.75" width="3" height="0.8" fill="#777"/><rect x="5" y="332.88" width="1" height="0.8" fill="#999"/><text x="0" y="0" transform="translate(8.8 336.40) rotate(-90)" font-size="9.8" text-anchor="middle" font-family="Liberation Sans" fill="#333">8</text><rect x="5" y="339.13" width="1" height="0.8" fill="#999"/><rect x="4" y="342.25" width="3" height="0.8" fill="#777"/><rect x="5" y="345.38" width="1" height="0.8" fill="#999"/><rect x="3.5" y="348.45" width="4.5" height="0.9" fill="#555"/><rect x="5" y="351.63" width="1" height="0.8" fill="#999"/><rect x="4" y="354.75" width="3" height="0.8" fill="#777"/><rect x="5" y="357.88" width="1" height="0.8" fill="#999"/><text x="0" y="0" transform="translate(8.8 361.40) rotate(-90)" font-size="9.8" text-anchor="middle" font-family="Liberation Sans" fill="#333">10</text><rect x="5" y="364.13" width="1" height="0.8" fill="#999"/><rect x="4" y="367.25" width="3" height="0.8" fill="#777"/><rect x="5" y="370.38" width="1" height="0.8" fill="#999"/><rect x="3.5" y="373.45" width="4.5" height="0.9" fill="#555"/><rect x="5" y="376.63" width="1" height="0.8" fill="#999"/><rect x="4" y="379.75" width="3" height="0.8" fill="#777"/><rect x="5" y="382.88" width="1" height="0.8" fill="#999"/><text x="0" y="0" transform="translate(8.8 386.40) rotate(-90)" font-size="9.8" text-anchor="middle" font-family="Liberation Sans" fill="#333">12</text><rect x="5" y="389.13" width="1" height="0.8" fill="#999"/><rect x="4" y="392.25" width="3" height="0.8" fill="#777"/><rect x="5" y="395.38" width="1" height="0.8" fill="#999"/><rect x="3.5" y="398.45" width="4.5" height="0.9" fill="#555"/><rect x="5" y="401.63" width="1" height="0.8" fill="#999"/><rect x="4" y="404.75" width="3" height="0.8" fill="#777"/><rect x="5" y="407.88" width="1" height="0.8" fill="#999"/><text x="0" y="0" transform="translate(8.8 411.40) rotate(-90)" font-size="9.8" text-anchor="middle" font-family="Liberation Sans" fill="#333">14</text><rect x="5" y="414.13" width="1" height="0.8" fill="#999"/><rect x="4" y="417.25" width="3" height="0.8" fill="#777"/><rect x="5" y="420.38" width="1" height="0.8" fill="#999"/><rect x="3.5" y="423.45" width="4.5" height="0.9" fill="#555"/><rect x="5" y="426.63" width="1" height="0.8" fill="#999"/><rect x="4" y="429.75" width="3" height="0.8" fill="#777"/><rect x="5" y="432.88" width="1" height="0.8" fill="#999"/><text x="0" y="0" transform="translate(8.8 436.40) rotate(-90)" font-size="9.8" text-anchor="middle" font-family="Liberation Sans" fill="#333">16</text><rect x="5" y="439.13" width="1" height="0.8" fill="#999"/><rect x="4" y="442.25" width="3" height="0.8" fill="#777"/><rect x="5" y="445.38" width="1" height="0.8" fill="#999"/><rect x="3.5" y="448.45" width="4.5" height="0.9" fill="#555"/><rect x="5" y="451.63" width="1" height="0.8" fill="#999"/><rect x="4" y="454.75" width="3" height="0.8" fill="#777"/><rect x="5" y="457.88" width="1" height="0.8" fill="#999"/><text x="0" y="0" transform="translate(8.8 461.40) rotate(-90)" font-size="9.8" text-anchor="middle" font-family="Liberation Sans" fill="#333">18</text><rect x="5" y="464.13" width="1" height="0.8" fill="#999"/><rect x="4" y="467.25" width="3" height="0.8" fill="#777"/><rect x="5" y="470.38" width="1" height="0.8" fill="#999"/></svg>
<div class="a" style="left:338.7px;top:322.4px;width:845px;height:475.6px;background:#fff;box-shadow:0 0 0 1px #d4d4d4"></div>
<span class="t" id="t77" style="left:588.4px;top:344.78px;font-size:22px;color:#1070c0;font-weight:700;font-family:'Liberation Sans',sans-serif;transform:scaleX(0.9284);">Kurum İç Değerlendirme Raporu (KİDR)</span>
<span class="t" id="t78" style="left:411.6px;top:396.88px;font-size:15.5px;color:#262a46;font-family:'Liberation Sans',sans-serif;transform:scaleX(1.0456);-webkit-text-stroke:0.25px #262a46;">Yükseköğretim kurumunun; eğitim-öğretim, araştırma ve geliştirme, toplumsal katkı faaliyetleri ile idari</span>
<span class="t" id="t79" style="left:411.6px;top:418.78px;font-size:15.5px;color:#262a46;font-family:'Liberation Sans',sans-serif;transform:scaleX(1.0364);-webkit-text-stroke:0.25px #262a46;">hizmetlerine ilişkin kalite güvencesi süreçlerini izlemek amacıyla yükseköğretim kurumu tarafından her yıl</span>
<span class="t" id="t80" style="left:411.6px;top:441.08px;font-size:15.5px;color:#262a46;font-family:'Liberation Sans',sans-serif;transform:scaleX(1.0298);-webkit-text-stroke:0.25px #262a46;">bir önceki yıla ilişkin hazırlanan raporu</span>
<div class="a" style="left:1302px;top:294.5px;width:13.5px;height:503.5px;background:#dcdcdc"></div>
<div class="a" style="left:1302px;top:294.7px;width:13.5px;height:12px;background:#fff;border:1px solid #cfcfcf;box-sizing:border-box"></div>
<svg class="a" style="left:1304.5px;top:297px;" width="9" height="6" viewBox="0 0 9 6"><path d="M0.8 5 L4.5 1 L8.2 5Z" fill="#666"/></svg>
<div class="a" style="left:1302px;top:601px;width:13.5px;height:148px;background:#fff;border:1px solid #bdbdbd;box-sizing:border-box"></div>
<div class="a" style="left:1302px;top:749px;width:13.5px;height:14px;background:#fff;border:1px solid #cfcfcf;box-sizing:border-box"></div>
<svg class="a" style="left:1304.5px;top:753px;" width="9" height="6" viewBox="0 0 9 6"><path d="M0.8 1 L4.5 5 L8.2 1Z" fill="#666"/></svg>
<div class="a" style="left:1302px;top:763px;width:13.5px;height:35px;background:#e6e6e6"></div>
<svg class="a" style="left:1304px;top:766px;" width="10" height="10" viewBox="0 0 10 10"><g fill="#666"><path d="M1 5 L5 1 L9 5Z"/><path d="M1 9 L5 5 L9 9Z"/></g></svg>
<svg class="a" style="left:1304px;top:781px;" width="10" height="10" viewBox="0 0 10 10"><g fill="#666"><path d="M1 1 L5 5 L9 1Z"/><path d="M1 5 L5 9 L9 5Z"/></g></svg>
<div class="a" style="left:491.8px;top:465.9px;width:602.2px;height:316.8px;background:#7f7fb8"></div>
<span class="t" id="t81" style="left:694.6px;top:479.34px;font-size:12px;color:#f2f2fa;font-family:'Liberation Sans',sans-serif;transform:scaleX(1.0759);">KALİTE YÖNETİM BİLGİ SİSTEMİ</span>
<div class="a" style="left:524.3px;top:517px;width:86px;height:75px;background:#fecb63;border-radius:3px"></div>
<svg class="a" style="left:524.3px;top:517px;" width="86" height="75" viewBox="0 0 86 75"><path d="M35 11 H25.7 V33.8 H59.7 V11 H50.5" stroke="#fff" stroke-width="1.9" fill="none"/><path d="M25.7 29 H59.7 M41.1 33.8 V40 M45.3 33.8 V40 M35.7 40.3 H50.2" stroke="#fff" stroke-width="1.9" fill="none"/><path d="M49.47 14.67 L49.21 15.97 L47.38 16.50 L46.80 17.36 L47.01 19.26 L45.91 20.00 L44.24 19.08 L43.22 19.28 L42.03 20.77 L40.73 20.51 L40.20 18.68 L39.34 18.10 L37.44 18.31 L36.70 17.21 L37.62 15.54 L37.42 14.52 L35.93 13.33 L36.19 12.03 L38.02 11.50 L38.60 10.64 L38.39 8.74 L39.49 8.00 L41.16 8.92 L42.18 8.72 L43.37 7.23 L44.67 7.49 L45.20 9.32 L46.06 9.90 L47.96 9.69 L48.70 10.79 L47.78 12.46 L47.98 13.48Z" fill="none" stroke="#fff" stroke-width="1.52" stroke-linejoin="round"/><circle cx="42.7" cy="14" r="2.8" fill="none" stroke="#fff" stroke-width="1.52"/></svg>
<div class="a" style="left:524.3px;top:569.8px;width:86px;text-align:center;font:700 8.3px/10px 'Liberation Sans',sans-serif;color:#fff;letter-spacing:0.3px">Misyon</div>
<div class="a" style="left:524.3px;top:580.0px;width:86px;text-align:center;font:700 8.3px/10px 'Liberation Sans',sans-serif;color:#fff;letter-spacing:0.3px">Politikalar</div>
<div class="a" style="left:675px;top:517px;width:86px;height:75px;background:#e8590c;border-radius:3px"></div>
<svg class="a" style="left:675px;top:517px;" width="86" height="75" viewBox="0 0 86 75"><circle cx="53" cy="14" r="6.2" stroke="#fff" stroke-width="1.9" fill="none"/><circle cx="53" cy="14" r="2.3" stroke="#fff" stroke-width="1.9" fill="none"/><path d="M44 14 H34 A4.7 4.7 0 0 0 34 23.4 H55 A5.2 5.2 0 0 1 55 33.8 H41" stroke="#fff" stroke-width="1.9" fill="none"/><path d="M41.5 10.8 L44.8 14 L41.5 17.2" stroke="#fff" stroke-width="1.9" fill="none"/><path d="M27.6 27 L40.9 33.8 L27.6 39.8 L31 33.8Z" stroke="#fff" stroke-width="1.9" fill="none" stroke-linejoin="round"/></svg>
<div class="a" style="left:675px;top:569.8px;width:86px;text-align:center;font:700 8.3px/10px 'Liberation Sans',sans-serif;color:#fff;letter-spacing:0.3px">Stratejik</div>
<div class="a" style="left:675px;top:580.0px;width:86px;text-align:center;font:700 8.3px/10px 'Liberation Sans',sans-serif;color:#fff;letter-spacing:0.3px">Yönetim</div>
<div class="a" style="left:826px;top:517px;width:86px;height:75px;background:#65aad8;border-radius:3px"></div>
<svg class="a" style="left:826px;top:517px;" width="86" height="75" viewBox="0 0 86 75"><circle cx="42.3" cy="13" r="5.3" stroke="#fff" stroke-width="1.9" fill="none"/><path d="M46 22.4 H35 Q30.9 22.4 30.9 26.5 V30.6 Q30.9 34.7 35 34.7 H42" stroke="#fff" stroke-width="1.9" fill="none"/><path d="M58.37 33.51 L58.09 34.89 L56.15 35.45 L55.54 36.36 L55.77 38.37 L54.59 39.15 L52.83 38.17 L51.75 38.39 L50.49 39.97 L49.11 39.69 L48.55 37.75 L47.64 37.14 L45.63 37.37 L44.85 36.19 L45.83 34.43 L45.61 33.35 L44.03 32.09 L44.31 30.71 L46.25 30.15 L46.86 29.24 L46.63 27.23 L47.81 26.45 L49.57 27.43 L50.65 27.21 L51.91 25.63 L53.29 25.91 L53.85 27.85 L54.76 28.46 L56.77 28.23 L57.55 29.41 L56.57 31.17 L56.79 32.25Z" fill="none" stroke="#fff" stroke-width="1.52" stroke-linejoin="round"/><circle cx="51.2" cy="32.8" r="3" fill="none" stroke="#fff" stroke-width="1.52"/></svg>
<div class="a" style="left:826px;top:569.8px;width:86px;text-align:center;font:700 8.3px/10px 'Liberation Sans',sans-serif;color:#fff;letter-spacing:0.3px">Süreç</div>
<div class="a" style="left:826px;top:580.0px;width:86px;text-align:center;font:700 8.3px/10px 'Liberation Sans',sans-serif;color:#fff;letter-spacing:0.3px">Yönetimi</div>
<div class="a" style="left:977.5px;top:517px;width:86px;height:75px;background:#92d050;border-radius:3px"></div>
<svg class="a" style="left:977.5px;top:517px;" width="86" height="75" viewBox="0 0 86 75"><rect x="26.1" y="13.5" width="33.1" height="24.1" rx="2" stroke="#fff" stroke-width="1.9" fill="none"/><path d="M38.4 13.5 V8.2 H46.9 V13.5" stroke="#fff" stroke-width="1.9" fill="none"/><path d="M41.67 26.77 L41.45 27.88 L39.89 28.33 L39.40 29.07 L39.58 30.68 L38.63 31.32 L37.21 30.53 L36.34 30.70 L35.33 31.97 L34.22 31.75 L33.77 30.19 L33.03 29.70 L31.42 29.88 L30.78 28.93 L31.57 27.51 L31.40 26.64 L30.13 25.63 L30.35 24.52 L31.91 24.07 L32.40 23.33 L32.22 21.72 L33.17 21.08 L34.59 21.87 L35.46 21.70 L36.47 20.43 L37.58 20.65 L38.03 22.21 L38.77 22.70 L40.38 22.52 L41.02 23.47 L40.23 24.89 L40.40 25.76Z" fill="none" stroke="#fff" stroke-width="1.36" stroke-linejoin="round"/><circle cx="35.9" cy="26.2" r="2.4" fill="none" stroke="#fff" stroke-width="1.36"/><g fill="#fff"><rect x="45.9" y="20" width="8.6" height="2"/><rect x="45.9" y="23.6" width="8.6" height="2"/><rect x="45.9" y="27.2" width="8.6" height="2"/><rect x="45.9" y="30.8" width="8.6" height="2"/></g></svg>
<div class="a" style="left:977.5px;top:569.8px;width:86px;text-align:center;font:700 8.3px/10px 'Liberation Sans',sans-serif;color:#fff;letter-spacing:0.3px">Kurumsal İç</div>
<div class="a" style="left:977.5px;top:580.0px;width:86px;text-align:center;font:700 8.3px/10px 'Liberation Sans',sans-serif;color:#fff;letter-spacing:0.3px">Değerlendirme</div>
<div class="a" style="left:524.3px;top:603.4px;width:86px;height:75px;background:#8e96fb;border-radius:3px"></div>
<svg class="a" style="left:524.3px;top:603.4px;" width="86" height="75" viewBox="0 0 86 75"><path d="M45 36.6 H28.8 V12.5 L33.3 7.8 H50.6 V23" stroke="#fff" stroke-width="1.9" fill="none"/><path d="M28.8 12.5 H33.3 V7.8" stroke="#fff" stroke-width="1.9" fill="none"/><path d="M33 17.3 H45.8 M33 21.1 H45.8 M33 25.3 H40" stroke="#fff" stroke-width="1.9" fill="none" stroke-width="1.6"/><path d="M57.58 32.73 L57.38 33.97 L55.37 34.49 L54.92 35.36 L55.68 37.30 L54.80 38.18 L52.86 37.42 L51.99 37.87 L51.47 39.88 L50.23 40.08 L49.11 38.32 L48.14 38.17 L46.54 39.49 L45.42 38.92 L45.55 36.84 L44.86 36.15 L42.78 36.28 L42.21 35.16 L43.53 33.56 L43.38 32.59 L41.62 31.47 L41.82 30.23 L43.83 29.71 L44.28 28.84 L43.52 26.90 L44.40 26.02 L46.34 26.78 L47.21 26.33 L47.73 24.32 L48.97 24.12 L50.09 25.88 L51.06 26.03 L52.66 24.71 L53.78 25.28 L53.65 27.36 L54.34 28.05 L56.42 27.92 L56.99 29.04 L55.67 30.64 L55.82 31.61Z" fill="none" stroke="#fff" stroke-width="1.52" stroke-linejoin="round"/><circle cx="49.6" cy="32.1" r="5.2" fill="none" stroke="#fff" stroke-width="1.52"/><path d="M46.3 32.2 L48.7 34.6 L53 30" stroke="#fff" stroke-width="1.9" fill="none" stroke-width="1.6"/></svg>
<div class="a" style="left:524.3px;top:656.1999999999999px;width:86px;text-align:center;font:700 8.3px/10px 'Liberation Sans',sans-serif;color:#fff;letter-spacing:0.3px">Birim İç</div>
<div class="a" style="left:524.3px;top:666.4px;width:86px;text-align:center;font:700 8.3px/10px 'Liberation Sans',sans-serif;color:#fff;letter-spacing:0.3px">Değerlendirme</div>
<div class="a" style="left:675px;top:603.4px;width:86px;height:75px;background:#7d7c3c;border-radius:3px"></div>
<svg class="a" style="left:675px;top:603.4px;" width="86" height="75" viewBox="0 0 86 75"><path d="M27.6 12 V39.6 H59.8" stroke="#fff" stroke-width="1.9" fill="none"/><path d="M31.6 38 V17.3 H36 V38 M38.5 38 V21 H42 V38" stroke="#fff" stroke-width="1.9" fill="none" stroke-width="1.6"/><path d="M44.5 38 V29 M47.5 38 V29 M50.5 38 V29 M53.5 38 V29 M56.5 38 V29" stroke="#fff" stroke-width="1.9" fill="none" stroke-width="1.4"/><path d="M48.4 12.2 A7 7 0 1 0 55.4 19.2 H48.4Z" stroke="#fff" stroke-width="1.9" fill="none" fill="#7d7c3c"/><path d="M51.5 8 A7 7 0 0 1 58.5 15 H51.5Z" stroke="#fff" stroke-width="1.9" fill="none"/></svg>
<div class="a" style="left:675px;top:656.1999999999999px;width:86px;text-align:center;font:700 8.3px/10px 'Liberation Sans',sans-serif;color:#fff;letter-spacing:0.3px">Kurumsal</div>
<div class="a" style="left:675px;top:666.4px;width:86px;text-align:center;font:700 8.3px/10px 'Liberation Sans',sans-serif;color:#fff;letter-spacing:0.3px">Göstergeler</div>
<div class="a" style="left:826px;top:603.4px;width:86px;height:75px;background:#04a29c;border-radius:3px"></div>
<svg class="a" style="left:826px;top:603.4px;" width="86" height="75" viewBox="0 0 86 75"><path d="M34.3 29.6 H32 Q26.2 29 26.2 22.7 Q26.2 17 31.5 16 Q33 7 42.7 6.9 Q52 7.2 54 15.6 Q59.3 16.5 59.3 22.7 Q59.3 29 53 29.6 H50.8" stroke="#fff" stroke-width="1.9" fill="none"/><path d="M34.3 40.4 V18.8 H46.5 L50.8 23 V40.4Z" stroke="#fff" stroke-width="1.9" fill="none"/><g fill="#fff"><rect x="37.3" y="26" width="9" height="1.8"/><rect x="37.3" y="29.5" width="10" height="1.8"/><rect x="37.3" y="33" width="6" height="1.8"/></g></svg>
<div class="a" style="left:826px;top:656.1999999999999px;width:86px;text-align:center;font:700 8.3px/10px 'Liberation Sans',sans-serif;color:#fff;letter-spacing:0.3px">Döküman</div>
<div class="a" style="left:826px;top:666.4px;width:86px;text-align:center;font:700 8.3px/10px 'Liberation Sans',sans-serif;color:#fff;letter-spacing:0.3px">Yönetimi</div>
<div class="a" style="left:977.5px;top:603.4px;width:86px;height:75px;background:#7c63c1;border-radius:3px"></div>
<svg class="a" style="left:977.5px;top:603.4px;" width="86" height="75" viewBox="0 0 86 75"><rect x="30.8" y="8.8" width="24" height="29.7" rx="3" stroke="#fff" stroke-width="1.9" fill="none"/><path d="M33.3 14.3 L35 16 L38 12.8 M33.3 20.3 L35 22 L38 18.8 M33.3 26 L35 27.7 L38 24.5 M33.3 31.7 L35 33.4 L38 30.2" stroke="#fff" stroke-width="1.9" fill="none" stroke-width="1.6"/><path d="M42.3 14.5 H51.4 M42.3 20.5 H51.4 M42.3 26.2 H51.4 M42.3 31.9 H51.4" stroke="#fff" stroke-width="1.9" fill="none" stroke-width="1.8"/></svg>
<div class="a" style="left:977.5px;top:656.1999999999999px;width:86px;text-align:center;font:700 8.3px/10px 'Liberation Sans',sans-serif;color:#fff;letter-spacing:0.3px">Anket</div>
<div class="a" style="left:977.5px;top:666.4px;width:86px;text-align:center;font:700 8.3px/10px 'Liberation Sans',sans-serif;color:#fff;letter-spacing:0.3px">Yönetimi</div>
<div class="a" style="left:524.3px;top:689.9px;width:86px;height:75px;background:#92d050;border-radius:3px"></div>
<svg class="a" style="left:524.3px;top:689.9px;" width="86" height="75" viewBox="0 0 86 75"><path d="M30.7 7.1 H55.7 M35 7.1 V15.5 H52.2 V7.1" stroke="#fff" stroke-width="1.9" fill="none"/><path d="M35.8 16 V20.5 Q35.8 28.6 43.5 28.9 Q51.3 28.6 51.3 20.5 V16" stroke="#fff" stroke-width="1.9" fill="none"/><path d="M39.3 28.3 L43.5 32 L47.7 28.3" stroke="#fff" stroke-width="1.9" fill="none"/><path d="M31 40.3 V35 Q31 30.5 36 30 L39.3 29 M56 40.3 V35 Q56 30.5 51 30 L47.7 29 M31 40.3 H56" stroke="#fff" stroke-width="1.9" fill="none"/><path d="M36.5 40.3 V37 M50.5 40.3 V37" stroke="#fff" stroke-width="1.9" fill="none"/></svg>
<div class="a" style="left:524.3px;top:742.6999999999999px;width:86px;text-align:center;font:700 8.3px/10px 'Liberation Sans',sans-serif;color:#fff;letter-spacing:0.3px">TYC</div>
<div class="a" style="left:524.3px;top:752.9px;width:86px;text-align:center;font:700 8.3px/10px 'Liberation Sans',sans-serif;color:#fff;letter-spacing:0.3px">Yeterlilikler</div>
<svg class="a" style="left:0px;top:717px;" width="24" height="40" viewBox="0 0 24 40"><defs><linearGradient id="hg" x1="0" y1="0" x2="1" y2="1"><stop offset="0" stop-color="#ffd54a"/><stop offset="1" stop-color="#f5a623"/></linearGradient></defs>
<path d="M-6 16 Q-1 9 4 12 L6 9 Q9 6 12 9 L20 19 Q24 25 21 31 Q17 38 10 38 Q3 37 -2 31 Z" fill="url(#hg)"/>
<path d="M0 12 Q3 8 6 11 L14 21 M3 9 Q6 5 9 8 L17 19 M-3 16 L9 27" fill="none" stroke="#e39a10" stroke-width="1" stroke-linecap="round"/>
<path d="M12 18 Q16 17 17 22 L14 25" fill="none" stroke="#e39a10" stroke-width="0.9"/>
<path d="M13 3 L14.5 8.5 M17.5 4.5 L16 9.5 M21.5 9 L17.5 11" stroke="#2bb0e0" stroke-width="1.6" stroke-linecap="round"/></svg>
<div class="a" style="left:-10px;top:771.8px;width:58px;height:19.2px;background:#abcdf8;border-radius:0 10px 10px 0"></div>
<span class="t" id="t82" style="left:0.5px;top:775.34px;font-size:12px;color:#1b1b1b;font-weight:700;font-family:'Liberation Sans',sans-serif;transform:scaleX(0.9229);">nt  Ca...</span>
<svg class="a" style="left:427px;top:786px;" width="10" height="14" viewBox="0 0 10 14"><path d="M1 1 V11.5 L3.6 9 L5.6 13 L7.2 12.2 L5.3 8.4 L8.8 8.2Z" fill="#fff" stroke="#111" stroke-width="0.9"/></svg>
<div class="a" style="left:1316px;top:152px;width:5px;height:656px;background:#17191c"></div>
<div class="a" style="left:0px;top:798px;width:1321px;height:10px;background:#000"></div>
<svg class="a" style="left:550px;top:803px;" width="18" height="5" viewBox="0 0 18 5"><ellipse cx="9" cy="7" rx="8" ry="5" fill="#f02a2a" stroke="#fff" stroke-width="0.8"/></svg>
</body></html>
